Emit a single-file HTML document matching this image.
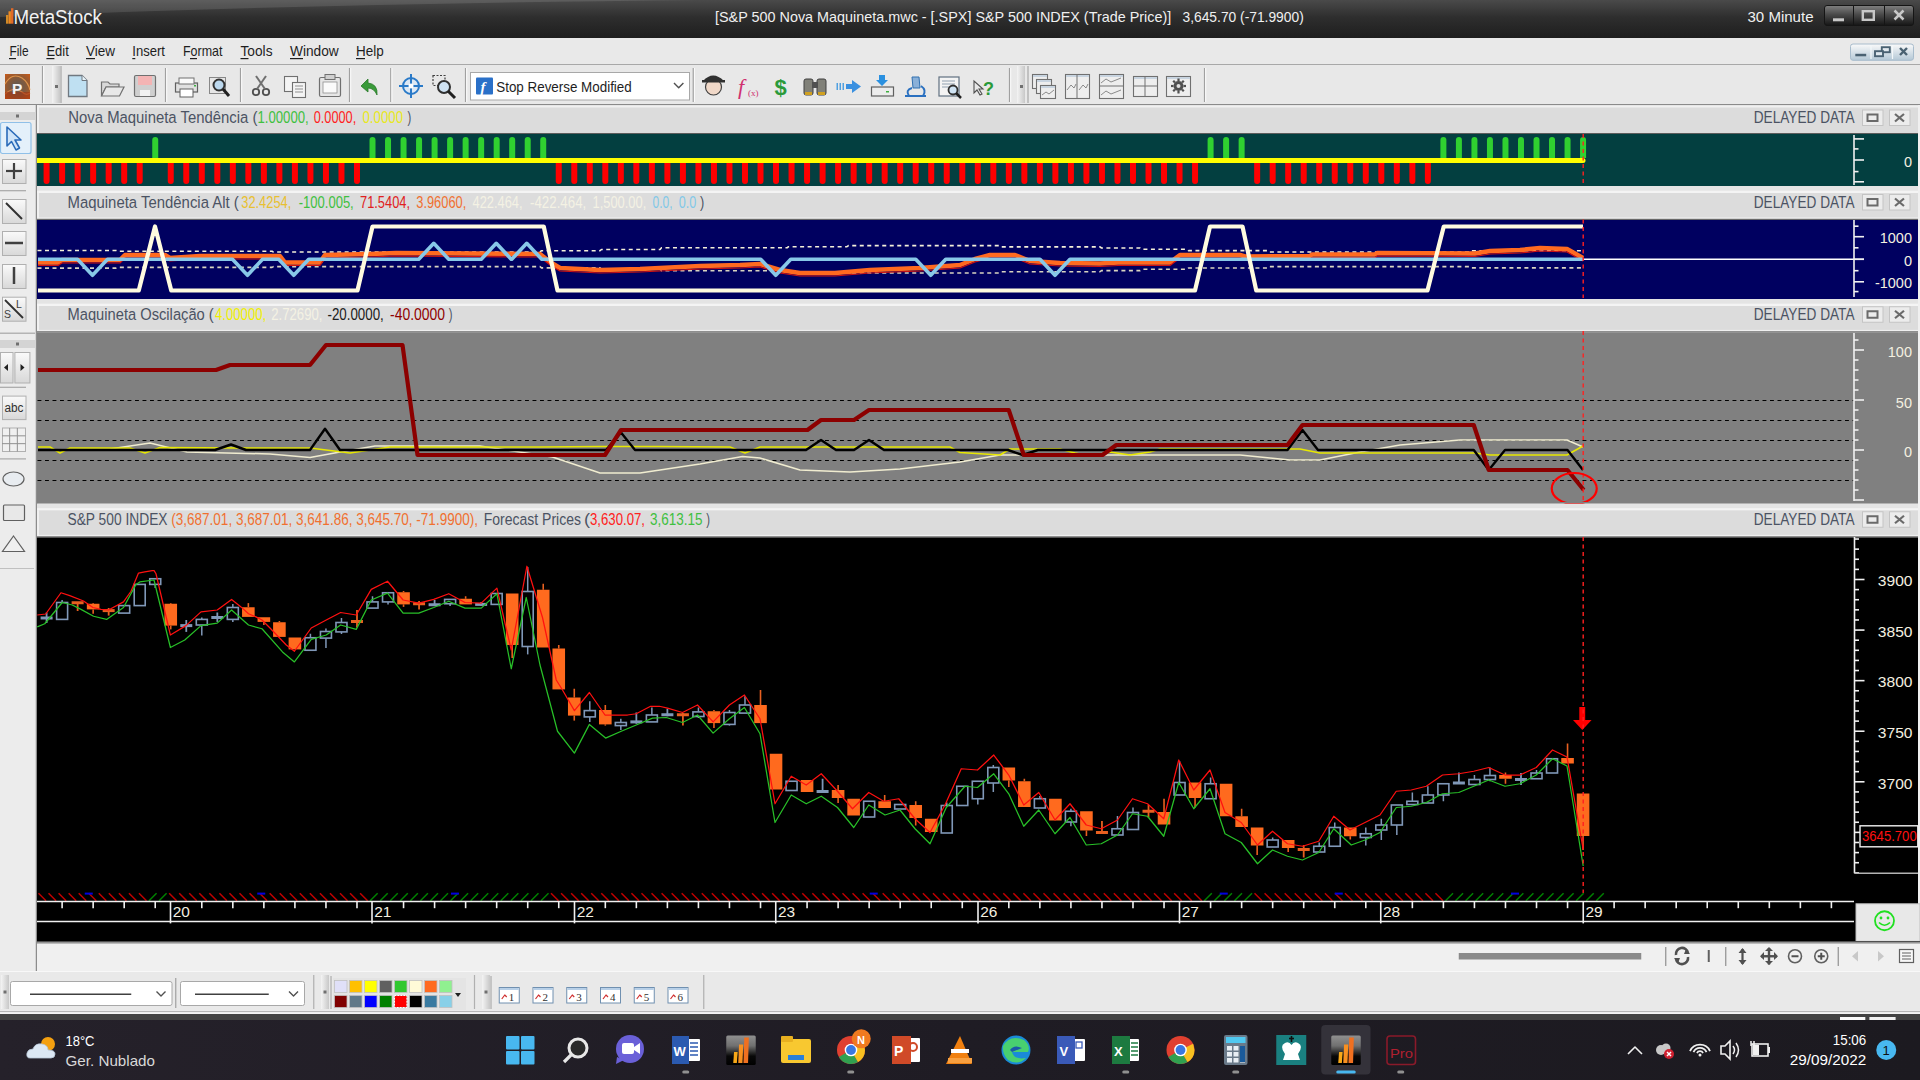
<!DOCTYPE html>
<html><head><meta charset="utf-8"><title>MetaStock</title>
<style>html,body{margin:0;padding:0;width:1920px;height:1080px;overflow:hidden;background:#e9e9e9;font-family:"Liberation Sans",sans-serif;} svg{display:block}</style>
</head><body>
<svg width="1920" height="1080" viewBox="0 0 1920 1080" font-family="Liberation Sans, sans-serif" shape-rendering="auto">
<defs><linearGradient id="tg" x1="0" y1="0" x2="0" y2="1"><stop offset="0" stop-color="#4a4a4a"/><stop offset="0.45" stop-color="#2e2e2e"/><stop offset="1" stop-color="#1e1e1e"/></linearGradient><linearGradient id="sheen" x1="0" y1="0" x2="1" y2="0"><stop offset="0" stop-color="#ffffff" stop-opacity="0.10"/><stop offset="0.6" stop-color="#ffffff" stop-opacity="0.05"/><stop offset="1" stop-color="#ffffff" stop-opacity="0"/></linearGradient><linearGradient id="btng" x1="0" y1="0" x2="0" y2="1"><stop offset="0" stop-color="#808080"/><stop offset="0.45" stop-color="#4a4a4a"/><stop offset="1" stop-color="#151515"/></linearGradient><linearGradient id="mdig" x1="0" y1="0" x2="0" y2="1"><stop offset="0" stop-color="#fafafa"/><stop offset="1" stop-color="#b4c8d6"/></linearGradient><linearGradient id="grip" x1="0" y1="0" x2="1" y2="0"><stop offset="0" stop-color="#f4f4f4"/><stop offset="1" stop-color="#c8c8c8"/></linearGradient><linearGradient id="tbbtn" x1="0" y1="0" x2="0" y2="1"><stop offset="0" stop-color="#fafafa"/><stop offset="1" stop-color="#d8d8d8"/></linearGradient><linearGradient id="picon" x1="0" y1="0" x2="1" y2="1"><stop offset="0" stop-color="#c86a28"/><stop offset="0.5" stop-color="#6a4a3a"/><stop offset="1" stop-color="#b04010"/></linearGradient><linearGradient id="taskg" x1="0" y1="0" x2="1" y2="0"><stop offset="0" stop-color="#25212a"/><stop offset="0.5" stop-color="#1f1c24"/><stop offset="1" stop-color="#1c1a20"/></linearGradient><linearGradient id="msg" x1="0" y1="0" x2="0" y2="1"><stop offset="0" stop-color="#909090"/><stop offset="0.35" stop-color="#707070"/><stop offset="0.7" stop-color="#080808"/><stop offset="1" stop-color="#000000"/></linearGradient></defs>
<rect x="0" y="0" width="1920" height="38" fill="url(#tg)" />
<path d="M0,0 L700,0 Q300,4 0,17 Z" fill="#ffffff" opacity="0.11"/>
<rect x="6" y="15" width="2.4" height="8.7" fill="#d08a28" />
<rect x="8.5" y="11.3" width="2.4" height="12.4" fill="#f08a20" />
<rect x="11" y="8.2" width="2.4" height="15.5" fill="#e06a28" />
<text x="13.4" y="23.7" font-size="20" fill="#f2f2f2" font-family="Liberation Sans" font-weight="normal" text-anchor="start" textLength="88.60" lengthAdjust="spacingAndGlyphs" >MetaStock</text>
<text x="715" y="22.2" font-size="15" fill="#f0f0f0" font-family="Liberation Sans" font-weight="normal" text-anchor="start" textLength="456.25" lengthAdjust="spacingAndGlyphs" >[S&amp;P 500 Nova Maquineta.mwc - [.SPX] S&amp;P 500 INDEX (Trade Price)]</text>
<text x="1182.5" y="22.2" font-size="15" fill="#f0f0f0" font-family="Liberation Sans" font-weight="normal" text-anchor="start" textLength="121.25" lengthAdjust="spacingAndGlyphs" >3,645.70 (-71.9900)</text>
<text x="1747.5" y="22.2" font-size="15" fill="#f0f0f0" font-family="Liberation Sans" font-weight="normal" text-anchor="start" textLength="66.00" lengthAdjust="spacingAndGlyphs" >30 Minute</text>
<rect x="1824.5" y="5.5" width="89" height="20" fill="url(#btng)" rx="2.5" stroke="#151515" stroke-width="1"/>
<line x1="1853.5" y1="6" x2="1853.5" y2="25" stroke="#151515" stroke-width="1" />
<line x1="1884.5" y1="6" x2="1884.5" y2="25" stroke="#151515" stroke-width="1" />
<rect x="1833" y="18.3" width="11" height="3" fill="#c8c8c8" />
<rect x="1862.8" y="11.2" width="11" height="8.6" fill="none" stroke="#c8c8c8" stroke-width="2.4"/>
<line x1="1894.5" y1="10.5" x2="1903.5" y2="19.5" stroke="#c8c8c8" stroke-width="2.5" />
<line x1="1903.5" y1="10.5" x2="1894.5" y2="19.5" stroke="#c8c8c8" stroke-width="2.5" />
<rect x="0" y="38" width="1920" height="26" fill="#e9e9e9" />
<line x1="0" y1="64.5" x2="1920" y2="64.5" stroke="#a8a8a8" stroke-width="1" />
<text x="9.4" y="56" font-size="14.5" fill="#1e1e1e" font-family="Liberation Sans" font-weight="normal" text-anchor="start" textLength="19.20" lengthAdjust="spacingAndGlyphs" >File</text>
<text x="46.4" y="56" font-size="14.5" fill="#1e1e1e" font-family="Liberation Sans" font-weight="normal" text-anchor="start" textLength="22.40" lengthAdjust="spacingAndGlyphs" >Edit</text>
<text x="86" y="56" font-size="14.5" fill="#1e1e1e" font-family="Liberation Sans" font-weight="normal" text-anchor="start" textLength="29.00" lengthAdjust="spacingAndGlyphs" >View</text>
<text x="132.3" y="56" font-size="14.5" fill="#1e1e1e" font-family="Liberation Sans" font-weight="normal" text-anchor="start" textLength="32.70" lengthAdjust="spacingAndGlyphs" >Insert</text>
<text x="183" y="56" font-size="14.5" fill="#1e1e1e" font-family="Liberation Sans" font-weight="normal" text-anchor="start" textLength="39.50" lengthAdjust="spacingAndGlyphs" >Format</text>
<text x="240.5" y="56" font-size="14.5" fill="#1e1e1e" font-family="Liberation Sans" font-weight="normal" text-anchor="start" textLength="32.00" lengthAdjust="spacingAndGlyphs" >Tools</text>
<text x="290" y="56" font-size="14.5" fill="#1e1e1e" font-family="Liberation Sans" font-weight="normal" text-anchor="start" textLength="48.70" lengthAdjust="spacingAndGlyphs" >Window</text>
<text x="356" y="56" font-size="14.5" fill="#1e1e1e" font-family="Liberation Sans" font-weight="normal" text-anchor="start" textLength="27.70" lengthAdjust="spacingAndGlyphs" >Help</text>
<rect x="9" y="58" width="7" height="1.2" fill="#1e1e1e" />
<rect x="46.4" y="58" width="8" height="1.2" fill="#1e1e1e" />
<rect x="86" y="58" width="9" height="1.2" fill="#1e1e1e" />
<rect x="132.3" y="58" width="3" height="1.2" fill="#1e1e1e" />
<rect x="190" y="58" width="7" height="1.2" fill="#1e1e1e" />
<rect x="240.5" y="58" width="8" height="1.2" fill="#1e1e1e" />
<rect x="290" y="58" width="13" height="1.2" fill="#1e1e1e" />
<rect x="356" y="58" width="9" height="1.2" fill="#1e1e1e" />
<rect x="1850.5" y="44" width="63" height="16.3" fill="url(#mdig)" stroke="#a8bccc" stroke-width="1" rx="2.5"/>
<line x1="1871" y1="45" x2="1871" y2="59" stroke="#f4f8fa" stroke-width="1.2" />
<line x1="1892.5" y1="45" x2="1892.5" y2="59" stroke="#f4f8fa" stroke-width="1.2" />
<rect x="1855.3" y="53.8" width="10.9" height="2.5" fill="#4a6272" />
<rect x="1881.8" y="47.2" width="8" height="5" fill="none" stroke="#4a6272" stroke-width="1.9"/>
<rect x="1875" y="51.2" width="8" height="5" fill="#dfe8ee" stroke="#4a6272" stroke-width="1.9"/>
<line x1="1900" y1="48" x2="1907" y2="55" stroke="#4a6272" stroke-width="2.4" />
<line x1="1907" y1="48" x2="1900" y2="55" stroke="#4a6272" stroke-width="2.4" />
<rect x="0" y="65" width="1920" height="39" fill="#e8e8e8" />
<line x1="0" y1="104.5" x2="1920" y2="104.5" stroke="#8a8a8a" stroke-width="1.2" />
<radialGradient id="pic2" cx="0.5" cy="0.5" r="0.7"><stop offset="0" stop-color="#5a5a58"/><stop offset="0.55" stop-color="#8a5a38"/><stop offset="1" stop-color="#c85a18"/></radialGradient>
<rect x="5" y="74" width="25" height="25" fill="url(#pic2)" />
<path d="M5,84 Q12,72 22,78 Q28,82 30,90" stroke="#f0a050" stroke-width="1.2" fill="none" opacity="0.8"/>
<path d="M5,94 Q14,86 22,92 Q26,96 30,93" stroke="#e08040" stroke-width="1.2" fill="none" opacity="0.8"/>
<rect x="5" y="92" width="25" height="7" fill="#a02808" opacity="0.45"/>
<text x="12" y="93.5" font-size="15.5" fill="#f4f4f4" font-family="Liberation Sans" font-weight="bold" text-anchor="start"  >P</text>
<line x1="42.5" y1="66" x2="42.5" y2="103" stroke="#a0a0a0" stroke-width="1.2" />
<line x1="43.7" y1="66" x2="43.7" y2="103" stroke="#fbfbfb" stroke-width="1" />
<rect x="52" y="66" width="8" height="37" fill="url(#grip)" />
<rect x="55" y="85.0" width="3" height="3" fill="#707070" />
<line x1="61" y1="66" x2="61" y2="103" stroke="#9a9a9a" stroke-width="1" />
<path d="M68.5,75.5 H82 L87,80.5 V96.5 H68.5 Z" fill="#bfe0f2" stroke="#707880" stroke-width="1.3"/>
<path d="M82,75.5 V80.5 H87" fill="#e8f4fa" stroke="#707880" stroke-width="1"/>
<path d="M101.5,82 H108 L110,84 H119 V87 H106 L101.5,96 Z" fill="#d8d8d8" stroke="#707070" stroke-width="1.2"/>
<path d="M101.5,96 L106,87 H124 L119.5,96 Z" fill="#e8e8e8" stroke="#707070" stroke-width="1.2"/>
<rect x="134.5" y="75.5" width="21" height="21" rx="1.5" fill="#cfcfcf" stroke="#707070" stroke-width="1.2"/>
<rect x="138" y="76" width="14" height="9" fill="#f4b4b4" />
<rect x="140" y="90" width="10" height="6" fill="#f2f2f2" />
<line x1="165.5" y1="68" x2="165.5" y2="102" stroke="#a0a0a0" stroke-width="1.2" />
<line x1="166.7" y1="68" x2="166.7" y2="102" stroke="#fbfbfb" stroke-width="1" />
<rect x="175.5" y="83" width="22" height="9" fill="#e0e0e0" stroke="#606060" stroke-width="1.2"/>
<rect x="179" y="78" width="15" height="6" fill="#fafafa" stroke="#707070" stroke-width="1"/>
<rect x="180" y="89" width="13" height="8" fill="#ffffff" stroke="#606060" stroke-width="1"/>
<rect x="194" y="85" width="2" height="1.5" fill="#3cb040" />
<rect x="209.5" y="77.5" width="16" height="16" fill="#e6e6e6" stroke="#888" stroke-width="1"/>
<circle cx="219" cy="85" r="5.5" fill="#bcd8ee" stroke="#303030" stroke-width="2"/>
<line x1="223" y1="89" x2="229" y2="96" stroke="#202020" stroke-width="3" />
<line x1="240.5" y1="68" x2="240.5" y2="102" stroke="#a0a0a0" stroke-width="1.2" />
<line x1="241.7" y1="68" x2="241.7" y2="102" stroke="#fbfbfb" stroke-width="1" />
<circle cx="256" cy="92" r="3.2" fill="none" stroke="#505050" stroke-width="1.8"/>
<circle cx="266" cy="92" r="3.2" fill="none" stroke="#505050" stroke-width="1.8"/>
<line x1="257" y1="89" x2="266" y2="76" stroke="#707070" stroke-width="2" />
<line x1="265" y1="89" x2="256" y2="76" stroke="#707070" stroke-width="2" />
<rect x="284.5" y="76.5" width="13" height="15" fill="#f4f4f4" stroke="#707070" stroke-width="1.1"/>
<rect x="292.5" y="82.5" width="13" height="15" fill="#f4f4f4" stroke="#707070" stroke-width="1.1"/>
<line x1="295" y1="86" x2="303" y2="86" stroke="#909090" stroke-width="1" />
<line x1="295" y1="89" x2="303" y2="89" stroke="#909090" stroke-width="1" />
<line x1="295" y1="92" x2="303" y2="92" stroke="#909090" stroke-width="1" />
<rect x="319.5" y="77.5" width="21" height="19" rx="1.5" fill="#e6e6e6" stroke="#707070" stroke-width="1.2"/>
<rect x="325" y="74.5" width="10" height="5" fill="#d0d0d0" stroke="#707070" stroke-width="1"/>
<rect x="323" y="82" width="14" height="11" fill="#fafafa" stroke="#909090" stroke-width="0.8"/>
<line x1="349.5" y1="68" x2="349.5" y2="102" stroke="#a0a0a0" stroke-width="1.2" />
<line x1="350.7" y1="68" x2="350.7" y2="102" stroke="#fbfbfb" stroke-width="1" />
<path d="M377,95 Q378,84 368,83 V79 L361,86 L368,92 V88 Q374,88 377,95 Z" fill="#3a9a3a" stroke="#2a7a2a" stroke-width="0.8"/>
<line x1="390.75" y1="68" x2="390.75" y2="102" stroke="#a0a0a0" stroke-width="1.2" />
<line x1="391.95" y1="68" x2="391.95" y2="102" stroke="#fbfbfb" stroke-width="1" />
<circle cx="411" cy="86" r="8" fill="#dde8f4" stroke="#2a7ac8" stroke-width="2"/>
<line x1="399" y1="86" x2="423" y2="86" stroke="#2a7ac8" stroke-width="2" />
<line x1="411" y1="74" x2="411" y2="98" stroke="#2a7ac8" stroke-width="2" />
<circle cx="411" cy="86" r="2.5" fill="#ffffff"/>
<rect x="433" y="75.5" width="12" height="10" fill="none" stroke="#404040" stroke-width="1.2" stroke-dasharray="2,1.5"/>
<circle cx="444" cy="87" r="6" fill="#cfe2f2" stroke="#303030" stroke-width="2"/>
<line x1="448" y1="91" x2="455" y2="98" stroke="#202020" stroke-width="3" />
<line x1="465.5" y1="68" x2="465.5" y2="102" stroke="#a0a0a0" stroke-width="1.2" />
<line x1="466.7" y1="68" x2="466.7" y2="102" stroke="#fbfbfb" stroke-width="1" />
<rect x="470.5" y="72.5" width="219" height="27.5" fill="#ffffff" stroke="#a8a8a8" stroke-width="1"/>
<rect x="476" y="77.5" width="17" height="17" fill="#2a70c8" rx="1"/>
<text x="480.5" y="92" font-size="15" fill="#ffffff" font-family="Liberation Serif" font-weight="bold" text-anchor="start"  font-style="italic">f</text>
<text x="496.25" y="91.5" font-size="14.5" fill="#1e1e1e" font-family="Liberation Sans" font-weight="normal" text-anchor="start" textLength="135.50" lengthAdjust="spacingAndGlyphs" >Stop Reverse Modified</text>
<polyline points="674.00,83.00 678.70,87.70 683.40,83.00" fill="none" stroke="#505050" stroke-width="1.4" stroke-linejoin="round" />
<line x1="693.25" y1="68" x2="693.25" y2="102" stroke="#a0a0a0" stroke-width="1.2" />
<line x1="694.45" y1="68" x2="694.45" y2="102" stroke="#fbfbfb" stroke-width="1" />
<circle cx="713.5" cy="87" r="8" fill="#f0d8c8" stroke="#404040" stroke-width="1.2"/>
<path d="M703,81 Q713,70 724,81 Z" fill="#303030"/>
<rect x="702" y="80" width="23" height="2.5" fill="#303030" />
<text x="738" y="94" font-size="22" fill="#d03070" font-family="Liberation Serif" font-weight="normal" text-anchor="start"  font-style="italic">f</text>
<text x="748" y="96" font-size="9" fill="#d03070" font-family="Liberation Serif" font-weight="normal" text-anchor="start"  >(x)</text>
<text x="774.5" y="95" font-size="22" fill="#2a9a3a" font-family="Liberation Sans" font-weight="bold" text-anchor="start"  >$</text>
<rect x="804" y="79" width="9" height="16" rx="2" fill="#808078" stroke="#404040" stroke-width="1"/>
<rect x="817" y="79" width="9" height="16" rx="2" fill="#808078" stroke="#404040" stroke-width="1"/>
<rect x="812" y="82" width="6" height="6" fill="#505050" />
<rect x="805" y="92" width="7" height="3" fill="#d0a020" />
<rect x="818" y="92" width="7" height="3" fill="#d0a020" />
<rect x="836.5" y="83" width="1.5" height="7" fill="#50a0e0" />
<rect x="839.5" y="83" width="1.5" height="7" fill="#50a0e0" />
<rect x="842.5" y="83" width="1.5" height="7" fill="#50a0e0" />
<path d="M846,84 H852 V80 L861,86.5 L852,93 V89 H846 Z" fill="#3a90e0"/>
<rect x="871.5" y="87" width="22" height="9" fill="#ececec" stroke="#606060" stroke-width="1.2"/>
<path d="M879,75 H885 V80 H888 L882,86 L876,80 H879 Z" fill="#2a90e0"/>
<rect x="886" y="91" width="3" height="1.5" fill="#40b040" />
<path d="M912,77 L919,77 L920,88 L913,88 Z" fill="#8ab0d8" stroke="#3070b0" stroke-width="1"/>
<path d="M905,96 H926 M909,96 Q905,90 912,88 M921,86 Q927,90 923,96" stroke="#2a70c0" stroke-width="2" fill="none"/>
<rect x="939" y="77" width="20" height="19" fill="#f4f4f4" stroke="#607080" stroke-width="1.2"/>
<line x1="942" y1="81" x2="955" y2="81" stroke="#90a0b0" stroke-width="1" />
<line x1="942" y1="84" x2="955" y2="84" stroke="#90a0b0" stroke-width="1" />
<line x1="942" y1="87" x2="955" y2="87" stroke="#90a0b0" stroke-width="1" />
<circle cx="953" cy="90" r="4.5" fill="#d0e4f4" stroke="#303030" stroke-width="1.8"/>
<line x1="956" y1="93" x2="961" y2="98" stroke="#202020" stroke-width="2.5" />
<path d="M974,81 L974,93 L977,90 L980,95 L982,94 L979,89 L983,89 Z" fill="#e8e8e8" stroke="#505050" stroke-width="1.1"/>
<text x="983" y="95" font-size="18" fill="#2a9a3a" font-family="Liberation Sans" font-weight="bold" text-anchor="start"  >?</text>
<line x1="1009.5" y1="68" x2="1009.5" y2="102" stroke="#a0a0a0" stroke-width="1.2" />
<line x1="1010.7" y1="68" x2="1010.7" y2="102" stroke="#fbfbfb" stroke-width="1" />
<rect x="1017" y="66" width="8" height="37" fill="url(#grip)" />
<rect x="1020" y="85.0" width="3" height="3" fill="#707070" />
<line x1="1028" y1="66" x2="1028" y2="103" stroke="#9a9a9a" stroke-width="1" />
<rect x="1032.5" y="74.5" width="15" height="14" fill="#eeeeee" stroke="#707070" stroke-width="1.1"/>
<rect x="1033" y="75" width="14" height="2" fill="#c8d4e0" />
<rect x="1036.5" y="79.5" width="15" height="14" fill="#eeeeee" stroke="#707070" stroke-width="1.1"/>
<rect x="1037" y="80" width="14" height="2" fill="#c8d4e0" />
<rect x="1040.5" y="85.5" width="15" height="13" fill="#eeeeee" stroke="#707070" stroke-width="1.1"/>
<rect x="1041" y="86" width="14" height="2" fill="#c8d4e0" />
<polyline points="1042.00,95.00 1046.00,92.00 1049.00,94.00 1054.00,90.00" fill="none" stroke="#707070" stroke-width="0.8" stroke-linejoin="round" />
<rect x="1065.5" y="74.5" width="24" height="24" fill="#eeeeee" stroke="#707070" stroke-width="1.1"/>
<rect x="1066" y="75" width="23" height="2" fill="#c8d4e0" />
<line x1="1077" y1="75" x2="1077" y2="98" stroke="#707070" stroke-width="1" />
<polyline points="1067.00,90.00 1071.00,85.00 1074.00,88.00 1076.00,84.00" fill="none" stroke="#707070" stroke-width="0.8" stroke-linejoin="round" />
<polyline points="1079.00,90.00 1083.00,85.00 1086.00,88.00 1088.00,84.00" fill="none" stroke="#707070" stroke-width="0.8" stroke-linejoin="round" />
<rect x="1099.5" y="74.5" width="24" height="24" fill="#eeeeee" stroke="#707070" stroke-width="1.1"/>
<rect x="1100" y="75" width="23" height="2" fill="#c8d4e0" />
<line x1="1099" y1="86" x2="1123" y2="86" stroke="#707070" stroke-width="1" />
<polyline points="1101.00,83.00 1106.00,79.00 1111.00,82.00 1121.00,78.00" fill="none" stroke="#707070" stroke-width="0.8" stroke-linejoin="round" />
<polyline points="1101.00,95.00 1106.00,91.00 1111.00,94.00 1121.00,90.00" fill="none" stroke="#707070" stroke-width="0.8" stroke-linejoin="round" />
<rect x="1133.5" y="76.5" width="24" height="20" fill="#eeeeee" stroke="#707070" stroke-width="1.1"/>
<rect x="1134" y="77" width="23" height="2" fill="#c8d4e0" />
<line x1="1145" y1="76" x2="1145" y2="96" stroke="#707070" stroke-width="1" />
<line x1="1133" y1="86" x2="1157" y2="86" stroke="#707070" stroke-width="1" />
<rect x="1166.5" y="76.5" width="24" height="20" fill="#eeeeee" stroke="#707070" stroke-width="1.1"/>
<rect x="1167" y="77" width="23" height="2" fill="#c8d4e0" />
<circle cx="1178.5" cy="86" r="5" fill="#505050"/><circle cx="1178.5" cy="86" r="2" fill="#e0e0e0"/>
<line x1="1183.5" y1="86.0" x2="1186.0" y2="86.0" stroke="#505050" stroke-width="2.2" />
<line x1="1182.0355339059327" y1="89.53553390593274" x2="1183.803300858899" y2="91.3033008588991" stroke="#505050" stroke-width="2.2" />
<line x1="1178.5" y1="91.0" x2="1178.5" y2="93.5" stroke="#505050" stroke-width="2.2" />
<line x1="1174.9644660940673" y1="89.53553390593274" x2="1173.196699141101" y2="91.3033008588991" stroke="#505050" stroke-width="2.2" />
<line x1="1173.5" y1="86.0" x2="1171.0" y2="86.0" stroke="#505050" stroke-width="2.2" />
<line x1="1174.9644660940673" y1="82.46446609406726" x2="1173.196699141101" y2="80.6966991411009" stroke="#505050" stroke-width="2.2" />
<line x1="1178.5" y1="81.0" x2="1178.5" y2="78.5" stroke="#505050" stroke-width="2.2" />
<line x1="1182.0355339059327" y1="82.46446609406726" x2="1183.803300858899" y2="80.6966991411009" stroke="#505050" stroke-width="2.2" />
<line x1="1204.5" y1="68" x2="1204.5" y2="102" stroke="#a0a0a0" stroke-width="1.2" />
<line x1="1205.7" y1="68" x2="1205.7" y2="102" stroke="#fbfbfb" stroke-width="1" />
<rect x="0" y="105" width="36" height="866" fill="#ececec" />
<line x1="36.5" y1="105" x2="36.5" y2="971" stroke="#8c8c8c" stroke-width="1.5" />
<rect x="0" y="112" width="35" height="8" fill="#d4d4d4" />
<rect x="16" y="114.5" width="3" height="3" fill="#707070" />
<rect x="0.5" y="122.5" width="30.5" height="31" rx="2" fill="#e4f0fa" stroke="#90c0e8" stroke-width="1.2"/>
<path d="M7,127 L7,146 L11.5,141.5 L16,150 L19.5,148 L15,140 L21,140 Z" fill="#cfe4f8" stroke="#2a6ab8" stroke-width="1.6" stroke-linejoin="round"/>
<rect x="2.5" y="159.5" width="23.5" height="24" fill="url(#tbbtn)" stroke="#b0b0b0" stroke-width="1"/>
<line x1="6" y1="171" x2="22" y2="171" stroke="#404040" stroke-width="2.2" />
<line x1="14" y1="163" x2="14" y2="179" stroke="#404040" stroke-width="2.2" />
<line x1="0" y1="190.7" x2="26" y2="190.7" stroke="#a8a8a8" stroke-width="1.2" />
<rect x="2.5" y="199.5" width="23.5" height="24" fill="url(#tbbtn)" stroke="#b0b0b0" stroke-width="1"/>
<line x1="6" y1="203" x2="22" y2="219" stroke="#303030" stroke-width="2" />
<rect x="2.5" y="231.5" width="23.5" height="24" fill="url(#tbbtn)" stroke="#b0b0b0" stroke-width="1"/>
<line x1="5" y1="243" x2="23" y2="243" stroke="#404040" stroke-width="2.5" />
<rect x="2.5" y="264.5" width="23.5" height="24" fill="url(#tbbtn)" stroke="#b0b0b0" stroke-width="1"/>
<line x1="14" y1="267" x2="14" y2="284" stroke="#404040" stroke-width="2.5" />
<rect x="2.5" y="297.2" width="23.5" height="24" fill="url(#tbbtn)" stroke="#b0b0b0" stroke-width="1"/>
<line x1="5" y1="300" x2="23" y2="318" stroke="#303030" stroke-width="1.8" />
<text x="4" y="318" font-size="10.5" fill="#404040" font-family="Liberation Sans" font-weight="normal" text-anchor="start"  >S</text>
<text x="16" y="307.5" font-size="10.5" fill="#404040" font-family="Liberation Sans" font-weight="normal" text-anchor="start"  >L</text>
<line x1="0" y1="333.2" x2="35" y2="333.2" stroke="#b4b4b4" stroke-width="1.4" />
<rect x="0" y="340" width="35" height="8" fill="#d4d4d4" />
<rect x="16" y="342.5" width="3" height="3" fill="#707070" />
<rect x="0.5" y="352.5" width="12.5" height="30.5" fill="url(#tbbtn)" stroke="#b0b0b0" stroke-width="1"/>
<rect x="14.9" y="352.5" width="15" height="30.5" fill="url(#tbbtn)" stroke="#b0b0b0" stroke-width="1"/>
<path d="M4,367.5 L8,364 L8,371 Z" fill="#202020"/><path d="M24.5,367.5 L20.5,364 L20.5,371 Z" fill="#202020"/>
<line x1="0" y1="387.3" x2="26" y2="387.3" stroke="#a8a8a8" stroke-width="1.2" />
<rect x="2.5" y="396.1" width="23.5" height="23.5" fill="url(#tbbtn)" stroke="#b0b0b0" stroke-width="1"/>
<text x="4.5" y="412" font-size="12" fill="#303030" font-family="Liberation Sans" font-weight="normal" text-anchor="start" textLength="19.00" lengthAdjust="spacingAndGlyphs" >abc</text>
<rect x="2.5" y="428" width="23" height="23.5" fill="#f0f0f0" stroke="#b0b0b0" stroke-width="1"/>
<line x1="9.666666666666668" y1="428" x2="9.666666666666668" y2="451.5" stroke="#909090" stroke-width="1" />
<line x1="2" y1="435.8333333333333" x2="25.5" y2="435.8333333333333" stroke="#909090" stroke-width="1" />
<line x1="17.333333333333336" y1="428" x2="17.333333333333336" y2="451.5" stroke="#909090" stroke-width="1" />
<line x1="2" y1="443.6666666666667" x2="25.5" y2="443.6666666666667" stroke="#909090" stroke-width="1" />
<line x1="0" y1="458.9" x2="26" y2="458.9" stroke="#a8a8a8" stroke-width="1.2" />
<ellipse cx="13.5" cy="479" rx="10.5" ry="7" fill="#e8ecf0" stroke="#606060" stroke-width="1.2"/>
<rect x="3.5" y="505" width="21" height="15.5" rx="1" fill="#e8e8e8" stroke="#606060" stroke-width="1.2"/>
<path d="M13.5,536 L24.5,551.5 L2.5,551.5 Z" fill="#f0f0f0" stroke="#606060" stroke-width="1.2"/>
<line x1="0" y1="568.5" x2="34" y2="568.5" stroke="#c0c0c0" stroke-width="1" />
<rect x="1918" y="105" width="2" height="866" fill="#f0f0f0" />
<rect x="37" y="105" width="1881" height="29" fill="#dcdcdc" />
<rect x="37" y="105.5" width="1881" height="2" fill="#f0f0f0" />
<rect x="37" y="105" width="2" height="29" fill="#f0f0f0" />
<rect x="37" y="133" width="1881" height="1.2" fill="#5c5c5c" />
<text x="68.3" y="123.0" font-size="16.3" fill="#4b5363" font-family="Liberation Sans" font-weight="normal" text-anchor="start" textLength="189.10" lengthAdjust="spacingAndGlyphs" xml:space="preserve">Nova Maquineta Tendência (</text>
<text x="257.5" y="123.0" font-size="16.3" fill="#40c040" font-family="Liberation Sans" font-weight="normal" text-anchor="start" textLength="51.25" lengthAdjust="spacingAndGlyphs" xml:space="preserve">1.00000,</text>
<text x="313.75" y="123.0" font-size="16.3" fill="#ff2020" font-family="Liberation Sans" font-weight="normal" text-anchor="start" textLength="42.50" lengthAdjust="spacingAndGlyphs" xml:space="preserve">0.0000,</text>
<text x="362.5" y="123.0" font-size="16.3" fill="#e8e820" font-family="Liberation Sans" font-weight="normal" text-anchor="start" textLength="40.50" lengthAdjust="spacingAndGlyphs" xml:space="preserve">0.0000</text>
<text x="407.5" y="123.0" font-size="16.3" fill="#4b5363" font-family="Liberation Sans" font-weight="normal" text-anchor="start" textLength="3.75" lengthAdjust="spacingAndGlyphs" xml:space="preserve">)</text>
<text x="1753.75" y="123.0" font-size="16.3" fill="#4b5363" font-family="Liberation Sans" font-weight="normal" text-anchor="start" textLength="100.75" lengthAdjust="spacingAndGlyphs" >DELAYED DATA</text>
<rect x="1862.5" y="110.0" width="20.5" height="15.5" fill="#ececec" stroke="#c4c4c4" stroke-width="1"/>
<rect x="1889.5" y="110.0" width="20.5" height="15.5" fill="#ececec" stroke="#c4c4c4" stroke-width="1"/>
<rect x="1867.5" y="114.5" width="10" height="6.5" fill="none" stroke="#6a6a6a" stroke-width="2"/>
<line x1="1895" y1="114.0" x2="1904" y2="121.5" stroke="#6a6a6a" stroke-width="2.2" />
<line x1="1904" y1="114.0" x2="1895" y2="121.5" stroke="#6a6a6a" stroke-width="2.2" />
<rect x="37" y="186" width="1881" height="34" fill="#e4e4e4" />
<rect x="37" y="190.7" width="1881" height="2.3" fill="#f4f4f4" />
<rect x="39" y="193" width="1879" height="25.4" fill="#dcdcdc" />
<rect x="37" y="193" width="2" height="25.4" fill="#f0f0f0" />
<rect x="37" y="217.4" width="1881" height="1.4" fill="#efefef" />
<rect x="37" y="218.8" width="1881" height="1.2" fill="#686868" />
<text x="67.5" y="207.5" font-size="16.3" fill="#4b5363" font-family="Liberation Sans" font-weight="normal" text-anchor="start" textLength="171.25" lengthAdjust="spacingAndGlyphs" xml:space="preserve">Maquineta Tendência Alt (</text>
<text x="241.25" y="207.5" font-size="16.3" fill="#e8c030" font-family="Liberation Sans" font-weight="normal" text-anchor="start" textLength="50.00" lengthAdjust="spacingAndGlyphs" xml:space="preserve">32.4254,</text>
<text x="298.75" y="207.5" font-size="16.3" fill="#40c040" font-family="Liberation Sans" font-weight="normal" text-anchor="start" textLength="55.00" lengthAdjust="spacingAndGlyphs" xml:space="preserve">-100.005,</text>
<text x="360" y="207.5" font-size="16.3" fill="#e02020" font-family="Liberation Sans" font-weight="normal" text-anchor="start" textLength="50.00" lengthAdjust="spacingAndGlyphs" xml:space="preserve">71.5404,</text>
<text x="416.25" y="207.5" font-size="16.3" fill="#f07030" font-family="Liberation Sans" font-weight="normal" text-anchor="start" textLength="50.00" lengthAdjust="spacingAndGlyphs" xml:space="preserve">3.96060,</text>
<text x="472.5" y="207.5" font-size="16.3" fill="#f4f2e4" font-family="Liberation Sans" font-weight="normal" text-anchor="start" textLength="50.00" lengthAdjust="spacingAndGlyphs" xml:space="preserve">422.464,</text>
<text x="530" y="207.5" font-size="16.3" fill="#f4f2e4" font-family="Liberation Sans" font-weight="normal" text-anchor="start" textLength="56.25" lengthAdjust="spacingAndGlyphs" xml:space="preserve">-422.464,</text>
<text x="592.5" y="207.5" font-size="16.3" fill="#f4f2e4" font-family="Liberation Sans" font-weight="normal" text-anchor="start" textLength="53.75" lengthAdjust="spacingAndGlyphs" xml:space="preserve">1,500.00,</text>
<text x="652.5" y="207.5" font-size="16.3" fill="#80c8e8" font-family="Liberation Sans" font-weight="normal" text-anchor="start" textLength="20.00" lengthAdjust="spacingAndGlyphs" xml:space="preserve">0.0,</text>
<text x="678.75" y="207.5" font-size="16.3" fill="#80c8e8" font-family="Liberation Sans" font-weight="normal" text-anchor="start" textLength="17.50" lengthAdjust="spacingAndGlyphs" xml:space="preserve">0.0</text>
<text x="700" y="207.5" font-size="16.3" fill="#4b5363" font-family="Liberation Sans" font-weight="normal" text-anchor="start" textLength="4.25" lengthAdjust="spacingAndGlyphs" xml:space="preserve">)</text>
<text x="1753.75" y="207.5" font-size="16.3" fill="#4b5363" font-family="Liberation Sans" font-weight="normal" text-anchor="start" textLength="100.75" lengthAdjust="spacingAndGlyphs" >DELAYED DATA</text>
<rect x="1862.5" y="194.5" width="20.5" height="15.5" fill="#ececec" stroke="#c4c4c4" stroke-width="1"/>
<rect x="1889.5" y="194.5" width="20.5" height="15.5" fill="#ececec" stroke="#c4c4c4" stroke-width="1"/>
<rect x="1867.5" y="199" width="10" height="6.5" fill="none" stroke="#6a6a6a" stroke-width="2"/>
<line x1="1895" y1="198.5" x2="1904" y2="206" stroke="#6a6a6a" stroke-width="2.2" />
<line x1="1904" y1="198.5" x2="1895" y2="206" stroke="#6a6a6a" stroke-width="2.2" />
<rect x="37" y="299" width="1881" height="33.5" fill="#e4e4e4" />
<rect x="37" y="303.7" width="1881" height="2.3" fill="#f4f4f4" />
<rect x="39" y="306" width="1879" height="24.9" fill="#dcdcdc" />
<rect x="37" y="306" width="2" height="24.9" fill="#f0f0f0" />
<rect x="37" y="329.9" width="1881" height="1.4" fill="#efefef" />
<rect x="37" y="331.3" width="1881" height="1.2" fill="#686868" />
<text x="67.5" y="319.75" font-size="16.3" fill="#4b5363" font-family="Liberation Sans" font-weight="normal" text-anchor="start" textLength="146.25" lengthAdjust="spacingAndGlyphs" xml:space="preserve">Maquineta Oscilação (</text>
<text x="215" y="319.75" font-size="16.3" fill="#f0f000" font-family="Liberation Sans" font-weight="normal" text-anchor="start" textLength="51.25" lengthAdjust="spacingAndGlyphs" xml:space="preserve">4.00000,</text>
<text x="271.25" y="319.75" font-size="16.3" fill="#f4f2e4" font-family="Liberation Sans" font-weight="normal" text-anchor="start" textLength="51.25" lengthAdjust="spacingAndGlyphs" xml:space="preserve">2.72690,</text>
<text x="327.5" y="319.75" font-size="16.3" fill="#202020" font-family="Liberation Sans" font-weight="normal" text-anchor="start" textLength="56.25" lengthAdjust="spacingAndGlyphs" xml:space="preserve">-20.0000,</text>
<text x="390" y="319.75" font-size="16.3" fill="#900000" font-family="Liberation Sans" font-weight="normal" text-anchor="start" textLength="55.00" lengthAdjust="spacingAndGlyphs" xml:space="preserve">-40.0000</text>
<text x="448.75" y="319.75" font-size="16.3" fill="#4b5363" font-family="Liberation Sans" font-weight="normal" text-anchor="start" textLength="3.75" lengthAdjust="spacingAndGlyphs" xml:space="preserve">)</text>
<text x="1753.75" y="319.75" font-size="16.3" fill="#4b5363" font-family="Liberation Sans" font-weight="normal" text-anchor="start" textLength="100.75" lengthAdjust="spacingAndGlyphs" >DELAYED DATA</text>
<rect x="1862.5" y="306.75" width="20.5" height="15.5" fill="#ececec" stroke="#c4c4c4" stroke-width="1"/>
<rect x="1889.5" y="306.75" width="20.5" height="15.5" fill="#ececec" stroke="#c4c4c4" stroke-width="1"/>
<rect x="1867.5" y="311.25" width="10" height="6.5" fill="none" stroke="#6a6a6a" stroke-width="2"/>
<line x1="1895" y1="310.75" x2="1904" y2="318.25" stroke="#6a6a6a" stroke-width="2.2" />
<line x1="1904" y1="310.75" x2="1895" y2="318.25" stroke="#6a6a6a" stroke-width="2.2" />
<rect x="37" y="503.5" width="1881" height="34.0" fill="#e4e4e4" />
<rect x="37" y="508.2" width="1881" height="2.3" fill="#f4f4f4" />
<rect x="39" y="510.5" width="1879" height="25.4" fill="#dcdcdc" />
<rect x="37" y="510.5" width="2" height="25.4" fill="#f0f0f0" />
<rect x="37" y="534.9" width="1881" height="1.4" fill="#efefef" />
<rect x="37" y="536.3" width="1881" height="1.2" fill="#686868" />
<text x="67.5" y="524.75" font-size="16.3" fill="#4b5363" font-family="Liberation Sans" font-weight="normal" text-anchor="start" textLength="100.00" lengthAdjust="spacingAndGlyphs" xml:space="preserve">S&amp;P 500 INDEX</text>
<text x="171.25" y="524.75" font-size="16.3" fill="#f07030" font-family="Liberation Sans" font-weight="normal" text-anchor="start" textLength="306.75" lengthAdjust="spacingAndGlyphs" xml:space="preserve">(3,687.01, 3,687.01, 3,641.86, 3,645.70, -71.9900),</text>
<text x="483.75" y="524.75" font-size="16.3" fill="#4b5363" font-family="Liberation Sans" font-weight="normal" text-anchor="start" textLength="97.25" lengthAdjust="spacingAndGlyphs" xml:space="preserve">Forecast Prices</text>
<text x="584" y="524.75" font-size="16.3" fill="#4b5363" font-family="Liberation Sans" font-weight="normal" text-anchor="start" textLength="6.00" lengthAdjust="spacingAndGlyphs" xml:space="preserve">(</text>
<text x="590" y="524.75" font-size="16.3" fill="#ff2020" font-family="Liberation Sans" font-weight="normal" text-anchor="start" textLength="55.00" lengthAdjust="spacingAndGlyphs" xml:space="preserve">3,630.07,</text>
<text x="650" y="524.75" font-size="16.3" fill="#40c040" font-family="Liberation Sans" font-weight="normal" text-anchor="start" textLength="52.50" lengthAdjust="spacingAndGlyphs" xml:space="preserve">3,613.15</text>
<text x="706.25" y="524.75" font-size="16.3" fill="#4b5363" font-family="Liberation Sans" font-weight="normal" text-anchor="start" textLength="3.75" lengthAdjust="spacingAndGlyphs" xml:space="preserve">)</text>
<text x="1753.75" y="524.75" font-size="16.3" fill="#4b5363" font-family="Liberation Sans" font-weight="normal" text-anchor="start" textLength="100.75" lengthAdjust="spacingAndGlyphs" >DELAYED DATA</text>
<rect x="1862.5" y="511.75" width="20.5" height="15.5" fill="#ececec" stroke="#c4c4c4" stroke-width="1"/>
<rect x="1889.5" y="511.75" width="20.5" height="15.5" fill="#ececec" stroke="#c4c4c4" stroke-width="1"/>
<rect x="1867.5" y="516.25" width="10" height="6.5" fill="none" stroke="#6a6a6a" stroke-width="2"/>
<line x1="1895" y1="515.75" x2="1904" y2="523.25" stroke="#6a6a6a" stroke-width="2.2" />
<line x1="1904" y1="515.75" x2="1895" y2="523.25" stroke="#6a6a6a" stroke-width="2.2" />
<rect x="37" y="134" width="1881" height="52" fill="#033f40" />
<path d="M43.59,160 V181 A3,3 0 0 0 49.59,181 V160 Z" fill="#ff0000"/>
<path d="M59.11,160 V181 A3,3 0 0 0 65.11,181 V160 Z" fill="#ff0000"/>
<path d="M74.63,160 V181 A3,3 0 0 0 80.63,181 V160 Z" fill="#ff0000"/>
<path d="M90.15,160 V181 A3,3 0 0 0 96.15,181 V160 Z" fill="#ff0000"/>
<path d="M105.67,160 V181 A3,3 0 0 0 111.67,181 V160 Z" fill="#ff0000"/>
<path d="M121.19,160 V181 A3,3 0 0 0 127.19,181 V160 Z" fill="#ff0000"/>
<path d="M136.71,160 V181 A3,3 0 0 0 142.71,181 V160 Z" fill="#ff0000"/>
<path d="M152.23,158 V140 A3,3 0 0 1 158.23,140 V158 Z" fill="#30d030"/>
<path d="M167.75,160 V181 A3,3 0 0 0 173.75,181 V160 Z" fill="#ff0000"/>
<path d="M183.27,160 V181 A3,3 0 0 0 189.27,181 V160 Z" fill="#ff0000"/>
<path d="M198.79,160 V181 A3,3 0 0 0 204.79,181 V160 Z" fill="#ff0000"/>
<path d="M214.31,160 V181 A3,3 0 0 0 220.31,181 V160 Z" fill="#ff0000"/>
<path d="M229.83,160 V181 A3,3 0 0 0 235.83,181 V160 Z" fill="#ff0000"/>
<path d="M245.35,160 V181 A3,3 0 0 0 251.35,181 V160 Z" fill="#ff0000"/>
<path d="M260.87,160 V181 A3,3 0 0 0 266.87,181 V160 Z" fill="#ff0000"/>
<path d="M276.39,160 V181 A3,3 0 0 0 282.39,181 V160 Z" fill="#ff0000"/>
<path d="M291.91,160 V181 A3,3 0 0 0 297.91,181 V160 Z" fill="#ff0000"/>
<path d="M307.43,160 V181 A3,3 0 0 0 313.43,181 V160 Z" fill="#ff0000"/>
<path d="M322.95,160 V181 A3,3 0 0 0 328.95,181 V160 Z" fill="#ff0000"/>
<path d="M338.47,160 V181 A3,3 0 0 0 344.47,181 V160 Z" fill="#ff0000"/>
<path d="M353.99,160 V181 A3,3 0 0 0 359.99,181 V160 Z" fill="#ff0000"/>
<path d="M369.51,158 V140 A3,3 0 0 1 375.51,140 V158 Z" fill="#30d030"/>
<path d="M385.03,158 V140 A3,3 0 0 1 391.03,140 V158 Z" fill="#30d030"/>
<path d="M400.55,158 V140 A3,3 0 0 1 406.55,140 V158 Z" fill="#30d030"/>
<path d="M416.07,158 V140 A3,3 0 0 1 422.07,140 V158 Z" fill="#30d030"/>
<path d="M431.59,158 V140 A3,3 0 0 1 437.59,140 V158 Z" fill="#30d030"/>
<path d="M447.11,158 V140 A3,3 0 0 1 453.11,140 V158 Z" fill="#30d030"/>
<path d="M462.63,158 V140 A3,3 0 0 1 468.63,140 V158 Z" fill="#30d030"/>
<path d="M478.15,158 V140 A3,3 0 0 1 484.15,140 V158 Z" fill="#30d030"/>
<path d="M493.67,158 V140 A3,3 0 0 1 499.67,140 V158 Z" fill="#30d030"/>
<path d="M509.19,158 V140 A3,3 0 0 1 515.19,140 V158 Z" fill="#30d030"/>
<path d="M524.71,158 V140 A3,3 0 0 1 530.71,140 V158 Z" fill="#30d030"/>
<path d="M540.23,158 V140 A3,3 0 0 1 546.23,140 V158 Z" fill="#30d030"/>
<path d="M555.75,160 V181 A3,3 0 0 0 561.75,181 V160 Z" fill="#ff0000"/>
<path d="M571.27,160 V181 A3,3 0 0 0 577.27,181 V160 Z" fill="#ff0000"/>
<path d="M586.79,160 V181 A3,3 0 0 0 592.79,181 V160 Z" fill="#ff0000"/>
<path d="M602.31,160 V181 A3,3 0 0 0 608.31,181 V160 Z" fill="#ff0000"/>
<path d="M617.83,160 V181 A3,3 0 0 0 623.83,181 V160 Z" fill="#ff0000"/>
<path d="M633.35,160 V181 A3,3 0 0 0 639.35,181 V160 Z" fill="#ff0000"/>
<path d="M648.87,160 V181 A3,3 0 0 0 654.87,181 V160 Z" fill="#ff0000"/>
<path d="M664.39,160 V181 A3,3 0 0 0 670.39,181 V160 Z" fill="#ff0000"/>
<path d="M679.91,160 V181 A3,3 0 0 0 685.91,181 V160 Z" fill="#ff0000"/>
<path d="M695.43,160 V181 A3,3 0 0 0 701.43,181 V160 Z" fill="#ff0000"/>
<path d="M710.95,160 V181 A3,3 0 0 0 716.95,181 V160 Z" fill="#ff0000"/>
<path d="M726.47,160 V181 A3,3 0 0 0 732.47,181 V160 Z" fill="#ff0000"/>
<path d="M741.99,160 V181 A3,3 0 0 0 747.99,181 V160 Z" fill="#ff0000"/>
<path d="M757.51,160 V181 A3,3 0 0 0 763.51,181 V160 Z" fill="#ff0000"/>
<path d="M773.03,160 V181 A3,3 0 0 0 779.03,181 V160 Z" fill="#ff0000"/>
<path d="M788.55,160 V181 A3,3 0 0 0 794.55,181 V160 Z" fill="#ff0000"/>
<path d="M804.07,160 V181 A3,3 0 0 0 810.07,181 V160 Z" fill="#ff0000"/>
<path d="M819.59,160 V181 A3,3 0 0 0 825.59,181 V160 Z" fill="#ff0000"/>
<path d="M835.11,160 V181 A3,3 0 0 0 841.11,181 V160 Z" fill="#ff0000"/>
<path d="M850.63,160 V181 A3,3 0 0 0 856.63,181 V160 Z" fill="#ff0000"/>
<path d="M866.15,160 V181 A3,3 0 0 0 872.15,181 V160 Z" fill="#ff0000"/>
<path d="M881.67,160 V181 A3,3 0 0 0 887.67,181 V160 Z" fill="#ff0000"/>
<path d="M897.19,160 V181 A3,3 0 0 0 903.19,181 V160 Z" fill="#ff0000"/>
<path d="M912.71,160 V181 A3,3 0 0 0 918.71,181 V160 Z" fill="#ff0000"/>
<path d="M928.23,160 V181 A3,3 0 0 0 934.23,181 V160 Z" fill="#ff0000"/>
<path d="M943.75,160 V181 A3,3 0 0 0 949.75,181 V160 Z" fill="#ff0000"/>
<path d="M959.27,160 V181 A3,3 0 0 0 965.27,181 V160 Z" fill="#ff0000"/>
<path d="M974.79,160 V181 A3,3 0 0 0 980.79,181 V160 Z" fill="#ff0000"/>
<path d="M990.31,160 V181 A3,3 0 0 0 996.31,181 V160 Z" fill="#ff0000"/>
<path d="M1005.83,160 V181 A3,3 0 0 0 1011.83,181 V160 Z" fill="#ff0000"/>
<path d="M1021.35,160 V181 A3,3 0 0 0 1027.35,181 V160 Z" fill="#ff0000"/>
<path d="M1036.87,160 V181 A3,3 0 0 0 1042.87,181 V160 Z" fill="#ff0000"/>
<path d="M1052.39,160 V181 A3,3 0 0 0 1058.39,181 V160 Z" fill="#ff0000"/>
<path d="M1067.91,160 V181 A3,3 0 0 0 1073.91,181 V160 Z" fill="#ff0000"/>
<path d="M1083.43,160 V181 A3,3 0 0 0 1089.43,181 V160 Z" fill="#ff0000"/>
<path d="M1098.95,160 V181 A3,3 0 0 0 1104.95,181 V160 Z" fill="#ff0000"/>
<path d="M1114.47,160 V181 A3,3 0 0 0 1120.47,181 V160 Z" fill="#ff0000"/>
<path d="M1129.99,160 V181 A3,3 0 0 0 1135.99,181 V160 Z" fill="#ff0000"/>
<path d="M1145.51,160 V181 A3,3 0 0 0 1151.51,181 V160 Z" fill="#ff0000"/>
<path d="M1161.03,160 V181 A3,3 0 0 0 1167.03,181 V160 Z" fill="#ff0000"/>
<path d="M1176.55,160 V181 A3,3 0 0 0 1182.55,181 V160 Z" fill="#ff0000"/>
<path d="M1192.07,160 V181 A3,3 0 0 0 1198.07,181 V160 Z" fill="#ff0000"/>
<path d="M1207.59,158 V140 A3,3 0 0 1 1213.59,140 V158 Z" fill="#30d030"/>
<path d="M1223.11,158 V140 A3,3 0 0 1 1229.11,140 V158 Z" fill="#30d030"/>
<path d="M1238.63,158 V140 A3,3 0 0 1 1244.63,140 V158 Z" fill="#30d030"/>
<path d="M1254.15,160 V181 A3,3 0 0 0 1260.15,181 V160 Z" fill="#ff0000"/>
<path d="M1269.67,160 V181 A3,3 0 0 0 1275.67,181 V160 Z" fill="#ff0000"/>
<path d="M1285.19,160 V181 A3,3 0 0 0 1291.19,181 V160 Z" fill="#ff0000"/>
<path d="M1300.71,160 V181 A3,3 0 0 0 1306.71,181 V160 Z" fill="#ff0000"/>
<path d="M1316.23,160 V181 A3,3 0 0 0 1322.23,181 V160 Z" fill="#ff0000"/>
<path d="M1331.75,160 V181 A3,3 0 0 0 1337.75,181 V160 Z" fill="#ff0000"/>
<path d="M1347.27,160 V181 A3,3 0 0 0 1353.27,181 V160 Z" fill="#ff0000"/>
<path d="M1362.79,160 V181 A3,3 0 0 0 1368.79,181 V160 Z" fill="#ff0000"/>
<path d="M1378.31,160 V181 A3,3 0 0 0 1384.31,181 V160 Z" fill="#ff0000"/>
<path d="M1393.83,160 V181 A3,3 0 0 0 1399.83,181 V160 Z" fill="#ff0000"/>
<path d="M1409.35,160 V181 A3,3 0 0 0 1415.35,181 V160 Z" fill="#ff0000"/>
<path d="M1424.87,160 V181 A3,3 0 0 0 1430.87,181 V160 Z" fill="#ff0000"/>
<path d="M1440.39,158 V140 A3,3 0 0 1 1446.39,140 V158 Z" fill="#30d030"/>
<path d="M1455.91,158 V140 A3,3 0 0 1 1461.91,140 V158 Z" fill="#30d030"/>
<path d="M1471.43,158 V140 A3,3 0 0 1 1477.43,140 V158 Z" fill="#30d030"/>
<path d="M1486.95,158 V140 A3,3 0 0 1 1492.95,140 V158 Z" fill="#30d030"/>
<path d="M1502.47,158 V140 A3,3 0 0 1 1508.47,140 V158 Z" fill="#30d030"/>
<path d="M1517.99,158 V140 A3,3 0 0 1 1523.99,140 V158 Z" fill="#30d030"/>
<path d="M1533.51,158 V140 A3,3 0 0 1 1539.51,140 V158 Z" fill="#30d030"/>
<path d="M1549.03,158 V140 A3,3 0 0 1 1555.03,140 V158 Z" fill="#30d030"/>
<path d="M1564.55,158 V140 A3,3 0 0 1 1570.55,140 V158 Z" fill="#30d030"/>
<path d="M1580.07,158 V140 A3,3 0 0 1 1586.07,140 V158 Z" fill="#30d030"/>
<rect x="37" y="158" width="1546" height="5" fill="#ffff00" />
<circle cx="1583" cy="160.5" r="2.5" fill="#ffff00"/>
<line x1="1583.2" y1="134" x2="1583.2" y2="186" stroke="#ff2020" stroke-width="1.4" stroke-dasharray="4,3.5"/>
<line x1="1854" y1="135" x2="1854" y2="185" stroke="#f0f0f0" stroke-width="1.6" />
<line x1="1854" y1="138.9" x2="1864" y2="138.9" stroke="#f0f0f0" stroke-width="1.6" />
<line x1="1854" y1="148.9" x2="1858.5" y2="148.9" stroke="#f0f0f0" stroke-width="1.6" />
<line x1="1854" y1="160" x2="1864" y2="160" stroke="#f0f0f0" stroke-width="1.6" />
<line x1="1854" y1="171.6" x2="1858.5" y2="171.6" stroke="#f0f0f0" stroke-width="1.6" />
<line x1="1854" y1="181.8" x2="1864" y2="181.8" stroke="#f0f0f0" stroke-width="1.6" />
<text x="1912" y="166.7" font-size="14.5" fill="#f4f0e0" font-family="Liberation Sans" font-weight="normal" text-anchor="end"  >0</text>
<rect x="37" y="220" width="1881" height="79" fill="#000060" />
<polyline points="37.50,250.50 116.00,250.50 117.50,251.20 272.00,251.20 273.50,252.00 540.00,252.00 541.50,250.70 600.00,250.70 601.50,249.50 660.00,249.50 661.50,247.80 787.00,247.80 788.50,246.70 847.00,246.70 848.50,245.60 1000.00,245.60 1001.50,246.90 1100.00,246.90 1101.50,248.00 1140.00,248.00 1141.50,249.30 1187.00,249.30 1188.50,250.60 1267.00,250.60 1268.50,252.00 1470.00,252.00 1471.50,250.70 1583.00,250.70" fill="none" stroke="#f4f0d8" stroke-width="1.6" stroke-linejoin="round" stroke-dasharray="4,3.5"/>
<polyline points="37.50,268.10 116.00,268.10 117.50,267.40 272.00,267.40 273.50,266.60 540.00,266.60 541.50,267.90 600.00,267.90 601.50,269.10 660.00,269.10 661.50,270.80 787.00,270.80 788.50,271.90 847.00,271.90 848.50,273.00 1000.00,273.00 1001.50,271.70 1100.00,271.70 1101.50,270.60 1140.00,270.60 1141.50,269.30 1187.00,269.30 1188.50,268.00 1267.00,268.00 1268.50,266.60 1470.00,266.60 1471.50,267.90 1583.00,267.90" fill="none" stroke="#d8d4c0" stroke-width="1.6" stroke-linejoin="round" stroke-dasharray="4,3.5"/>
<polyline points="38.00,262.50 58.00,262.50 62.00,260.00 120.00,260.00 125.00,255.00 165.00,255.00 170.00,258.00 200.00,256.00 280.00,256.00 285.00,262.50 320.00,262.50 325.00,255.00 370.00,254.00 396.00,253.00 540.00,254.00 550.00,262.00 560.00,268.00 600.00,270.00 640.00,269.00 700.00,266.00 740.00,265.00 760.00,264.00 780.00,270.00 800.00,273.00 835.00,273.00 870.00,270.00 920.00,268.00 960.00,265.00 975.00,259.00 990.00,255.00 1015.00,255.00 1030.00,261.00 1060.00,263.00 1100.00,263.50 1118.00,262.50 1170.00,262.50 1180.00,255.00 1240.00,255.00 1245.00,256.50 1310.00,256.00 1312.00,254.50 1375.00,254.50 1377.00,253.00 1475.00,253.50 1490.00,251.00 1520.00,250.00 1540.00,248.00 1567.00,249.00 1583.00,258.00" fill="none" stroke="#ff6a20" stroke-width="4.5" stroke-linejoin="round" />
<polyline points="38.00,265.50 58.00,265.50 62.00,263.00 120.00,263.00 125.00,258.00 165.00,258.00 170.00,261.00 200.00,259.00 280.00,259.00 285.00,265.50 320.00,265.50 325.00,258.00 370.00,257.00 396.00,256.00 540.00,257.00 550.00,265.00 560.00,271.00 600.00,273.00 640.00,272.00 700.00,269.00 740.00,268.00 760.00,267.00 780.00,273.00 800.00,276.00 835.00,276.00 870.00,273.00 920.00,271.00 960.00,268.00 975.00,262.00 990.00,258.00 1015.00,258.00 1030.00,264.00 1060.00,266.00 1100.00,266.50 1118.00,265.50 1170.00,265.50 1180.00,258.00 1240.00,258.00 1245.00,259.50 1310.00,259.00 1312.00,257.50 1375.00,257.50 1377.00,256.00 1475.00,256.50 1490.00,254.00 1520.00,253.00 1540.00,251.00 1567.00,252.00 1583.00,261.00" fill="none" stroke="#d01010" stroke-width="1.2" stroke-linejoin="round" />
<line x1="1583" y1="259.3" x2="1864" y2="259.3" stroke="#ffffff" stroke-width="1.4" />
<polyline points="38.00,259.30 77.50,259.30 92.50,275.30 107.50,259.30 232.50,259.30 247.50,275.30 262.50,259.30 278.75,259.30 293.75,275.30 308.75,259.30 418.75,259.30 433.75,243.30 448.75,259.30 481.25,259.30 496.25,243.30 511.25,259.30 511.75,259.30 526.75,243.30 541.75,259.30 760.75,259.30 775.75,275.30 790.75,259.30 915.75,259.30 930.75,275.30 945.75,259.30 1040.00,259.30 1055.00,275.30 1070.00,259.30 1583.00,259.30" fill="none" stroke="#88c8e8" stroke-width="3.6" stroke-linejoin="round" />
<polyline points="38.00,290.50 138.75,290.50 155.00,226.50 171.25,290.50 357.50,290.50 372.50,226.50 543.75,226.50 557.50,290.50 1195.00,290.50 1210.00,226.50 1242.50,226.50 1256.25,290.50 1427.50,290.50 1443.75,226.50 1583.00,226.50" fill="none" stroke="#fffbe0" stroke-width="4.2" stroke-linejoin="round" />
<line x1="1854" y1="220" x2="1854" y2="297" stroke="#f0f0f0" stroke-width="1.6" />
<line x1="1854" y1="226.2" x2="1858.5" y2="226.2" stroke="#f0f0f0" stroke-width="1.6" />
<line x1="1854" y1="236.7" x2="1864" y2="236.7" stroke="#f0f0f0" stroke-width="1.6" />
<line x1="1854" y1="247.8" x2="1858.5" y2="247.8" stroke="#f0f0f0" stroke-width="1.6" />
<line x1="1854" y1="259.3" x2="1864" y2="259.3" stroke="#f0f0f0" stroke-width="1.6" />
<line x1="1854" y1="270.7" x2="1858.5" y2="270.7" stroke="#f0f0f0" stroke-width="1.6" />
<line x1="1854" y1="281.8" x2="1864" y2="281.8" stroke="#f0f0f0" stroke-width="1.6" />
<line x1="1854" y1="291.6" x2="1858.5" y2="291.6" stroke="#f0f0f0" stroke-width="1.6" />
<text x="1912" y="243.3" font-size="14.5" fill="#f4f0e0" font-family="Liberation Sans" font-weight="normal" text-anchor="end"  >1000</text>
<text x="1912" y="266.2" font-size="14.5" fill="#f4f0e0" font-family="Liberation Sans" font-weight="normal" text-anchor="end"  >0</text>
<text x="1912" y="288.4" font-size="14.5" fill="#f4f0e0" font-family="Liberation Sans" font-weight="normal" text-anchor="end"  >-1000</text>
<line x1="1583.2" y1="219.5" x2="1583.2" y2="298" stroke="#ff2020" stroke-width="1.4" stroke-dasharray="4,3.5"/>
<rect x="37" y="332.5" width="1881" height="171" fill="#808080" />
<line x1="37.5" y1="400.5" x2="1854" y2="400.5" stroke="#000000" stroke-width="1.2" stroke-dasharray="3.9,3.6"/>
<line x1="37.5" y1="420.5" x2="1854" y2="420.5" stroke="#000000" stroke-width="1.2" stroke-dasharray="3.9,3.6"/>
<line x1="37.5" y1="440.5" x2="1854" y2="440.5" stroke="#000000" stroke-width="1.2" stroke-dasharray="3.9,3.6"/>
<line x1="37.5" y1="460.5" x2="1854" y2="460.5" stroke="#000000" stroke-width="1.2" stroke-dasharray="3.9,3.6"/>
<line x1="37.5" y1="480.5" x2="1854" y2="480.5" stroke="#000000" stroke-width="1.2" stroke-dasharray="3.9,3.6"/>
<polyline points="38.00,450.00 110.00,449.00 150.00,443.00 187.00,452.00 270.00,454.00 310.00,457.50 340.00,452.00 375.00,446.00 480.00,446.00 552.50,457.00 600.00,473.00 640.00,473.00 700.00,464.00 742.50,456.50 760.00,458.00 800.00,470.00 850.00,472.00 900.00,469.00 960.00,462.00 1000.00,455.00 1240.00,455.00 1270.00,458.00 1290.00,460.00 1320.00,460.00 1360.00,452.00 1400.00,445.00 1460.00,440.00 1567.00,440.00 1583.00,447.00" fill="none" stroke="#f0ecd0" stroke-width="1.5" stroke-linejoin="round" />
<polyline points="38.00,447.00 50.00,447.00 60.00,453.00 70.00,448.00 130.00,448.00 145.00,453.00 160.00,447.50 240.00,448.00 310.00,448.00 350.00,453.00 390.00,447.00 540.00,447.00 600.00,446.50 660.00,446.50 730.00,447.00 745.00,453.00 760.00,447.00 950.00,447.00 960.00,452.50 1000.00,455.00 1010.00,449.00 1060.00,449.00 1075.00,453.00 1090.00,456.00 1110.00,452.00 1130.00,455.00 1150.00,452.00 1160.00,449.00 1300.00,449.00 1320.00,453.00 1475.00,453.00 1490.00,455.00 1540.00,455.00 1567.00,455.00 1583.00,446.00" fill="none" stroke="#e8e800" stroke-width="1.5" stroke-linejoin="round" />
<polyline points="38.00,450.00 215.00,450.00 231.00,444.50 246.00,450.00 310.00,450.00 325.00,428.75 340.00,450.00 606.00,450.00 621.00,432.50 635.00,450.00 806.00,450.00 821.00,440.00 836.00,450.00 854.00,450.00 869.00,440.00 884.00,450.00 1008.00,450.00 1022.50,455.00 1038.00,450.00 1287.50,450.00 1302.50,430.00 1318.00,450.00 1473.75,450.00 1488.75,470.00 1505.00,450.00 1567.50,450.00 1583.00,470.00" fill="none" stroke="#000000" stroke-width="2.4" stroke-linejoin="round" />
<polyline points="38.00,370.00 216.00,370.00 230.00,365.00 310.00,365.00 326.00,345.00 402.50,345.00 417.50,455.00 605.00,455.00 621.00,430.00 807.50,430.00 821.00,420.00 854.00,420.00 869.00,410.00 1008.75,410.00 1023.75,455.00 1102.50,455.00 1116.25,445.00 1287.50,445.00 1302.50,425.00 1473.75,425.00 1488.75,470.00 1567.50,470.00 1583.75,490.00" fill="none" stroke="#8c0000" stroke-width="4.2" stroke-linejoin="round" />
<line x1="1583.2" y1="331" x2="1583.2" y2="503" stroke="#ff2020" stroke-width="1.4" stroke-dasharray="4,3.5"/>
<clipPath id="p3clip"><rect x="37" y="332.5" width="1881" height="171"/></clipPath>
<ellipse cx="1574.25" cy="488.5" rx="22.5" ry="15.5" fill="none" stroke="#ff0000" stroke-width="2.2" clip-path="url(#p3clip)"/>
<rect x="37" y="502" width="1820" height="1" fill="#808080" />
<line x1="1854" y1="333" x2="1854" y2="501" stroke="#f0f0f0" stroke-width="1.6" />
<line x1="1854" y1="340" x2="1858.5" y2="340" stroke="#f0f0f0" stroke-width="1.6" />
<line x1="1854" y1="350" x2="1864" y2="350" stroke="#f0f0f0" stroke-width="1.6" />
<line x1="1854" y1="360" x2="1858.5" y2="360" stroke="#f0f0f0" stroke-width="1.6" />
<line x1="1854" y1="370" x2="1858.5" y2="370" stroke="#f0f0f0" stroke-width="1.6" />
<line x1="1854" y1="380" x2="1858.5" y2="380" stroke="#f0f0f0" stroke-width="1.6" />
<line x1="1854" y1="390" x2="1858.5" y2="390" stroke="#f0f0f0" stroke-width="1.6" />
<line x1="1854" y1="400" x2="1864" y2="400" stroke="#f0f0f0" stroke-width="1.6" />
<line x1="1854" y1="410" x2="1858.5" y2="410" stroke="#f0f0f0" stroke-width="1.6" />
<line x1="1854" y1="420" x2="1858.5" y2="420" stroke="#f0f0f0" stroke-width="1.6" />
<line x1="1854" y1="430" x2="1858.5" y2="430" stroke="#f0f0f0" stroke-width="1.6" />
<line x1="1854" y1="440" x2="1858.5" y2="440" stroke="#f0f0f0" stroke-width="1.6" />
<line x1="1854" y1="450" x2="1864" y2="450" stroke="#f0f0f0" stroke-width="1.6" />
<line x1="1854" y1="460" x2="1858.5" y2="460" stroke="#f0f0f0" stroke-width="1.6" />
<line x1="1854" y1="470" x2="1858.5" y2="470" stroke="#f0f0f0" stroke-width="1.6" />
<line x1="1854" y1="480" x2="1858.5" y2="480" stroke="#f0f0f0" stroke-width="1.6" />
<line x1="1854" y1="490" x2="1858.5" y2="490" stroke="#f0f0f0" stroke-width="1.6" />
<line x1="1854" y1="500" x2="1864" y2="500" stroke="#f0f0f0" stroke-width="1.6" />
<text x="1912" y="357.4" font-size="14.5" fill="#f4f0e0" font-family="Liberation Sans" font-weight="normal" text-anchor="end"  >100</text>
<text x="1912" y="408" font-size="14.5" fill="#f4f0e0" font-family="Liberation Sans" font-weight="normal" text-anchor="end"  >50</text>
<text x="1912" y="457.3" font-size="14.5" fill="#f4f0e0" font-family="Liberation Sans" font-weight="normal" text-anchor="end"  >0</text>
<rect x="37" y="537.5" width="1881" height="403.5" fill="#000000" />
<line x1="46.59" y1="612.5" x2="46.59" y2="623" stroke="#8098b8" stroke-width="1.8" />
<rect x="40.59" y="616.5" width="12" height="3" fill="#8098b8" />
<line x1="62.11" y1="600" x2="62.11" y2="602.5" stroke="#8098b8" stroke-width="1.5" />
<rect x="56.61" y="602.5" width="11" height="16.899999999999977" fill="none" stroke="#8098b8" stroke-width="1.6"/>
<line x1="77.63" y1="602" x2="77.63" y2="611" stroke="#e86020" stroke-width="1.8" />
<rect x="71.63" y="601.25" width="12" height="3" fill="#e86020" />
<line x1="93.15" y1="603" x2="93.15" y2="603.75" stroke="#e86020" stroke-width="1.6" />
<line x1="93.15" y1="609.4" x2="93.15" y2="613.75" stroke="#e86020" stroke-width="1.6" />
<rect x="86.85000000000001" y="603.75" width="12.6" height="5.649999999999977" fill="#ff6a1e" />
<line x1="108.67" y1="608" x2="108.67" y2="615.6" stroke="#e86020" stroke-width="1.8" />
<rect x="102.67" y="609.1" width="12" height="3" fill="#e86020" />
<rect x="118.69" y="605.6" width="11" height="7.5" fill="none" stroke="#8098b8" stroke-width="1.6"/>
<rect x="134.21" y="584.4" width="11" height="21.200000000000045" fill="none" stroke="#8098b8" stroke-width="1.6"/>
<line x1="155.23" y1="578" x2="155.23" y2="578.75" stroke="#8098b8" stroke-width="1.5" />
<line x1="155.23" y1="584.4" x2="155.23" y2="588" stroke="#8098b8" stroke-width="1.5" />
<rect x="149.73" y="578.75" width="11" height="5.649999999999977" fill="none" stroke="#8098b8" stroke-width="1.6"/>
<line x1="170.75" y1="603" x2="170.75" y2="603.75" stroke="#e86020" stroke-width="1.6" />
<line x1="170.75" y1="625.6" x2="170.75" y2="629.4" stroke="#e86020" stroke-width="1.6" />
<rect x="164.45" y="603.75" width="12.6" height="21.850000000000023" fill="#ff6a1e" />
<line x1="186.27" y1="620" x2="186.27" y2="631.9" stroke="#8098b8" stroke-width="1.8" />
<rect x="180.27" y="624.1" width="12" height="3" fill="#8098b8" />
<line x1="201.79" y1="617.5" x2="201.79" y2="619.4" stroke="#8098b8" stroke-width="1.5" />
<line x1="201.79" y1="625" x2="201.79" y2="635.6" stroke="#8098b8" stroke-width="1.5" />
<rect x="196.29" y="619.4" width="11" height="5.600000000000023" fill="none" stroke="#8098b8" stroke-width="1.6"/>
<line x1="217.31" y1="612.5" x2="217.31" y2="621.9" stroke="#8098b8" stroke-width="1.8" />
<rect x="211.31" y="616.0" width="12" height="3" fill="#8098b8" />
<line x1="232.82999999999998" y1="604" x2="232.82999999999998" y2="607.5" stroke="#8098b8" stroke-width="1.5" />
<line x1="232.82999999999998" y1="619.4" x2="232.82999999999998" y2="622" stroke="#8098b8" stroke-width="1.5" />
<rect x="227.32999999999998" y="607.5" width="11" height="11.899999999999977" fill="none" stroke="#8098b8" stroke-width="1.6"/>
<line x1="248.35" y1="603.1" x2="248.35" y2="607.25" stroke="#e86020" stroke-width="1.6" />
<rect x="242.04999999999998" y="607.25" width="12.6" height="9.649999999999977" fill="#ff6a1e" />
<line x1="263.87" y1="621.9" x2="263.87" y2="625" stroke="#e86020" stroke-width="1.6" />
<rect x="257.57" y="617.25" width="12.6" height="4.649999999999977" fill="#ff6a1e" />
<line x1="279.39" y1="621" x2="279.39" y2="622.25" stroke="#e86020" stroke-width="1.6" />
<rect x="273.09" y="622.25" width="12.6" height="14.649999999999977" fill="#ff6a1e" />
<rect x="288.60999999999996" y="637.5" width="12.6" height="11.899999999999977" fill="#ff6a1e" />
<line x1="310.43" y1="633.75" x2="310.43" y2="637.75" stroke="#8098b8" stroke-width="1.5" />
<rect x="304.93" y="637.75" width="11" height="12.5" fill="none" stroke="#8098b8" stroke-width="1.6"/>
<line x1="325.95" y1="628.5" x2="325.95" y2="631.5" stroke="#8098b8" stroke-width="1.5" />
<line x1="325.95" y1="638.1" x2="325.95" y2="648.1" stroke="#8098b8" stroke-width="1.5" />
<rect x="320.45" y="631.5" width="11" height="6.600000000000023" fill="none" stroke="#8098b8" stroke-width="1.6"/>
<line x1="341.47" y1="618" x2="341.47" y2="622.5" stroke="#8098b8" stroke-width="1.5" />
<line x1="341.47" y1="631.9" x2="341.47" y2="634" stroke="#8098b8" stroke-width="1.5" />
<rect x="335.97" y="622.5" width="11" height="9.399999999999977" fill="none" stroke="#8098b8" stroke-width="1.6"/>
<line x1="356.99" y1="610" x2="356.99" y2="627.5" stroke="#e86020" stroke-width="1.8" />
<rect x="350.99" y="620.0" width="12" height="3" fill="#e86020" />
<line x1="372.51" y1="596.25" x2="372.51" y2="601.9" stroke="#8098b8" stroke-width="1.5" />
<rect x="367.01" y="601.9" width="11" height="6.2000000000000455" fill="none" stroke="#8098b8" stroke-width="1.6"/>
<line x1="388.03" y1="601.9" x2="388.03" y2="604.4" stroke="#8098b8" stroke-width="1.5" />
<rect x="382.53" y="592.75" width="11" height="9.149999999999977" fill="none" stroke="#8098b8" stroke-width="1.6"/>
<line x1="403.54999999999995" y1="591" x2="403.54999999999995" y2="592.25" stroke="#e86020" stroke-width="1.6" />
<line x1="403.54999999999995" y1="604.4" x2="403.54999999999995" y2="606.9" stroke="#e86020" stroke-width="1.6" />
<rect x="397.24999999999994" y="592.25" width="12.6" height="12.149999999999977" fill="#ff6a1e" />
<line x1="419.07" y1="601" x2="419.07" y2="609.4" stroke="#e86020" stroke-width="1.8" />
<rect x="413.07" y="602.25" width="12" height="3" fill="#e86020" />
<line x1="434.59" y1="600" x2="434.59" y2="606" stroke="#8098b8" stroke-width="1.8" />
<rect x="428.59" y="603.25" width="12" height="3" fill="#8098b8" />
<line x1="450.11" y1="603.75" x2="450.11" y2="606" stroke="#8098b8" stroke-width="1.5" />
<rect x="444.61" y="599.4" width="11" height="4.350000000000023" fill="none" stroke="#8098b8" stroke-width="1.6"/>
<line x1="465.63" y1="596.25" x2="465.63" y2="598.75" stroke="#e86020" stroke-width="1.6" />
<rect x="459.33" y="598.75" width="12.6" height="5.649999999999977" fill="#ff6a1e" />
<line x1="481.15" y1="602" x2="481.15" y2="606" stroke="#8098b8" stroke-width="1.8" />
<rect x="475.15" y="602.9" width="12" height="3" fill="#8098b8" />
<rect x="491.17" y="593.5" width="11" height="10.899999999999977" fill="none" stroke="#8098b8" stroke-width="1.6"/>
<line x1="512.19" y1="645" x2="512.19" y2="658" stroke="#e86020" stroke-width="1.6" />
<rect x="505.89000000000004" y="593.5" width="12.6" height="51.5" fill="#ff6a1e" />
<line x1="527.71" y1="567" x2="527.71" y2="591.5" stroke="#8098b8" stroke-width="1.5" />
<line x1="527.71" y1="646.5" x2="527.71" y2="654.4" stroke="#8098b8" stroke-width="1.5" />
<rect x="522.21" y="591.5" width="11" height="55.0" fill="none" stroke="#8098b8" stroke-width="1.6"/>
<line x1="543.23" y1="583.75" x2="543.23" y2="589.75" stroke="#e86020" stroke-width="1.6" />
<rect x="536.9300000000001" y="589.75" width="12.6" height="57.75" fill="#ff6a1e" />
<line x1="558.75" y1="645" x2="558.75" y2="648.5" stroke="#e86020" stroke-width="1.6" />
<rect x="552.45" y="648.5" width="12.6" height="40.89999999999998" fill="#ff6a1e" />
<line x1="574.27" y1="688.75" x2="574.27" y2="697.5" stroke="#e86020" stroke-width="1.6" />
<line x1="574.27" y1="715.6" x2="574.27" y2="720.6" stroke="#e86020" stroke-width="1.6" />
<rect x="567.97" y="697.5" width="12.6" height="18.100000000000023" fill="#ff6a1e" />
<line x1="589.79" y1="701.25" x2="589.79" y2="710.6" stroke="#8098b8" stroke-width="1.5" />
<line x1="589.79" y1="716.9" x2="589.79" y2="721.9" stroke="#8098b8" stroke-width="1.5" />
<rect x="584.29" y="710.6" width="11" height="6.2999999999999545" fill="none" stroke="#8098b8" stroke-width="1.6"/>
<line x1="605.31" y1="705" x2="605.31" y2="710" stroke="#e86020" stroke-width="1.6" />
<line x1="605.31" y1="724.4" x2="605.31" y2="725.6" stroke="#e86020" stroke-width="1.6" />
<rect x="599.01" y="710" width="12.6" height="14.399999999999977" fill="#ff6a1e" />
<line x1="620.8299999999999" y1="718.75" x2="620.8299999999999" y2="722.5" stroke="#8098b8" stroke-width="1.5" />
<line x1="620.8299999999999" y1="725.6" x2="620.8299999999999" y2="730" stroke="#8098b8" stroke-width="1.5" />
<rect x="615.3299999999999" y="722.5" width="11" height="3.1000000000000227" fill="none" stroke="#8098b8" stroke-width="1.6"/>
<line x1="636.3499999999999" y1="712.5" x2="636.3499999999999" y2="723.75" stroke="#8098b8" stroke-width="1.8" />
<rect x="630.3499999999999" y="720.4" width="12" height="3" fill="#8098b8" />
<line x1="651.87" y1="707.5" x2="651.87" y2="715" stroke="#8098b8" stroke-width="1.5" />
<rect x="646.37" y="715" width="11" height="6.899999999999977" fill="none" stroke="#8098b8" stroke-width="1.6"/>
<line x1="667.39" y1="708.75" x2="667.39" y2="716.25" stroke="#8098b8" stroke-width="1.8" />
<rect x="661.39" y="713.25" width="12" height="3" fill="#8098b8" />
<line x1="682.91" y1="713" x2="682.91" y2="725.6" stroke="#e86020" stroke-width="1.8" />
<rect x="676.91" y="713.25" width="12" height="3" fill="#e86020" />
<line x1="698.43" y1="707.5" x2="698.43" y2="711.9" stroke="#8098b8" stroke-width="1.5" />
<line x1="698.43" y1="716.5" x2="698.43" y2="718" stroke="#8098b8" stroke-width="1.5" />
<rect x="692.93" y="711.9" width="11" height="4.600000000000023" fill="none" stroke="#8098b8" stroke-width="1.6"/>
<line x1="713.9499999999999" y1="710" x2="713.9499999999999" y2="711.25" stroke="#e86020" stroke-width="1.6" />
<line x1="713.9499999999999" y1="723.1" x2="713.9499999999999" y2="728.1" stroke="#e86020" stroke-width="1.6" />
<rect x="707.65" y="711.25" width="12.6" height="11.850000000000023" fill="#ff6a1e" />
<line x1="729.47" y1="710" x2="729.47" y2="712.5" stroke="#8098b8" stroke-width="1.5" />
<line x1="729.47" y1="724.4" x2="729.47" y2="725.6" stroke="#8098b8" stroke-width="1.5" />
<rect x="723.97" y="712.5" width="11" height="11.899999999999977" fill="none" stroke="#8098b8" stroke-width="1.6"/>
<line x1="744.99" y1="696.25" x2="744.99" y2="705" stroke="#8098b8" stroke-width="1.5" />
<rect x="739.49" y="705" width="11" height="8.100000000000023" fill="none" stroke="#8098b8" stroke-width="1.6"/>
<line x1="760.51" y1="690" x2="760.51" y2="705" stroke="#e86020" stroke-width="1.6" />
<rect x="754.21" y="705" width="12.6" height="18.100000000000023" fill="#ff6a1e" />
<rect x="769.73" y="753.75" width="12.6" height="35.75" fill="#ff6a1e" />
<rect x="786.05" y="781.25" width="11" height="9.25" fill="none" stroke="#8098b8" stroke-width="1.6"/>
<rect x="800.77" y="780" width="12.6" height="12" fill="#ff6a1e" />
<line x1="822.59" y1="778.75" x2="822.59" y2="793" stroke="#8098b8" stroke-width="1.8" />
<rect x="816.59" y="790.0" width="12" height="3" fill="#8098b8" />
<line x1="838.11" y1="785" x2="838.11" y2="790" stroke="#e86020" stroke-width="1.6" />
<line x1="838.11" y1="798" x2="838.11" y2="803" stroke="#e86020" stroke-width="1.6" />
<rect x="831.8100000000001" y="790" width="12.6" height="8" fill="#ff6a1e" />
<rect x="847.33" y="798.75" width="12.6" height="16.75" fill="#ff6a1e" />
<rect x="863.65" y="801.25" width="11" height="15.75" fill="none" stroke="#8098b8" stroke-width="1.6"/>
<line x1="884.67" y1="795" x2="884.67" y2="801.25" stroke="#e86020" stroke-width="1.6" />
<rect x="878.37" y="801.25" width="12.6" height="6.75" fill="#ff6a1e" />
<rect x="894.6899999999999" y="804.5" width="11" height="4.5" fill="none" stroke="#8098b8" stroke-width="1.6"/>
<line x1="915.71" y1="801.25" x2="915.71" y2="805" stroke="#e86020" stroke-width="1.6" />
<line x1="915.71" y1="818" x2="915.71" y2="825.5" stroke="#e86020" stroke-width="1.6" />
<rect x="909.4100000000001" y="805" width="12.6" height="13" fill="#ff6a1e" />
<rect x="924.9300000000001" y="818.75" width="12.6" height="13.25" fill="#ff6a1e" />
<line x1="946.75" y1="802.5" x2="946.75" y2="805.5" stroke="#8098b8" stroke-width="1.5" />
<rect x="941.25" y="805.5" width="11" height="27.5" fill="none" stroke="#8098b8" stroke-width="1.6"/>
<rect x="956.77" y="786.25" width="11" height="19.25" fill="none" stroke="#8098b8" stroke-width="1.6"/>
<line x1="977.79" y1="798.75" x2="977.79" y2="804.5" stroke="#8098b8" stroke-width="1.5" />
<rect x="972.29" y="781.25" width="11" height="17.5" fill="none" stroke="#8098b8" stroke-width="1.6"/>
<line x1="993.31" y1="765" x2="993.31" y2="767.5" stroke="#8098b8" stroke-width="1.5" />
<line x1="993.31" y1="783" x2="993.31" y2="792" stroke="#8098b8" stroke-width="1.5" />
<rect x="987.81" y="767.5" width="11" height="15.5" fill="none" stroke="#8098b8" stroke-width="1.6"/>
<line x1="1008.8299999999999" y1="780.5" x2="1008.8299999999999" y2="787" stroke="#e86020" stroke-width="1.6" />
<rect x="1002.53" y="767.5" width="12.6" height="13.0" fill="#ff6a1e" />
<line x1="1024.35" y1="778.75" x2="1024.35" y2="781.25" stroke="#e86020" stroke-width="1.6" />
<rect x="1018.05" y="781.25" width="12.6" height="25.75" fill="#ff6a1e" />
<line x1="1039.87" y1="796" x2="1039.87" y2="798.75" stroke="#8098b8" stroke-width="1.5" />
<rect x="1034.37" y="798.75" width="11" height="9.25" fill="none" stroke="#8098b8" stroke-width="1.6"/>
<rect x="1049.09" y="798.75" width="12.6" height="21.75" fill="#ff6a1e" />
<line x1="1070.9099999999999" y1="808.75" x2="1070.9099999999999" y2="811.25" stroke="#8098b8" stroke-width="1.5" />
<line x1="1070.9099999999999" y1="822" x2="1070.9099999999999" y2="826.25" stroke="#8098b8" stroke-width="1.5" />
<rect x="1065.4099999999999" y="811.25" width="11" height="10.75" fill="none" stroke="#8098b8" stroke-width="1.6"/>
<line x1="1086.4299999999998" y1="830.5" x2="1086.4299999999998" y2="836" stroke="#e86020" stroke-width="1.6" />
<rect x="1080.1299999999999" y="811.25" width="12.6" height="19.25" fill="#ff6a1e" />
<line x1="1101.9499999999998" y1="821" x2="1101.9499999999998" y2="834" stroke="#e86020" stroke-width="1.8" />
<rect x="1095.9499999999998" y="831.0" width="12" height="3" fill="#e86020" />
<line x1="1117.47" y1="816" x2="1117.47" y2="828.75" stroke="#8098b8" stroke-width="1.5" />
<rect x="1111.97" y="828.75" width="11" height="6.25" fill="none" stroke="#8098b8" stroke-width="1.6"/>
<line x1="1132.99" y1="807.5" x2="1132.99" y2="812.5" stroke="#8098b8" stroke-width="1.5" />
<rect x="1127.49" y="812.5" width="11" height="17.0" fill="none" stroke="#8098b8" stroke-width="1.6"/>
<line x1="1148.51" y1="805" x2="1148.51" y2="817.5" stroke="#e86020" stroke-width="1.8" />
<rect x="1142.51" y="809.75" width="12" height="3" fill="#e86020" />
<line x1="1164.03" y1="798.75" x2="1164.03" y2="812" stroke="#e86020" stroke-width="1.6" />
<rect x="1157.73" y="812" width="12.6" height="12.5" fill="#ff6a1e" />
<line x1="1179.55" y1="761" x2="1179.55" y2="782.5" stroke="#8098b8" stroke-width="1.5" />
<rect x="1174.05" y="782.5" width="11" height="12.5" fill="none" stroke="#8098b8" stroke-width="1.6"/>
<line x1="1195.07" y1="798" x2="1195.07" y2="807.5" stroke="#e86020" stroke-width="1.6" />
<rect x="1188.77" y="782.5" width="12.6" height="15.5" fill="#ff6a1e" />
<line x1="1210.59" y1="777.5" x2="1210.59" y2="783.75" stroke="#8098b8" stroke-width="1.5" />
<rect x="1205.09" y="783.75" width="11" height="15.0" fill="none" stroke="#8098b8" stroke-width="1.6"/>
<rect x="1219.81" y="783.75" width="12.6" height="32.5" fill="#ff6a1e" />
<line x1="1241.6299999999999" y1="808.75" x2="1241.6299999999999" y2="816.25" stroke="#e86020" stroke-width="1.6" />
<rect x="1235.33" y="816.25" width="12.6" height="10.75" fill="#ff6a1e" />
<line x1="1257.1499999999999" y1="845.5" x2="1257.1499999999999" y2="855" stroke="#e86020" stroke-width="1.6" />
<rect x="1250.85" y="827.5" width="12.6" height="18.0" fill="#ff6a1e" />
<line x1="1272.67" y1="837.5" x2="1272.67" y2="840" stroke="#8098b8" stroke-width="1.5" />
<rect x="1267.17" y="840" width="11" height="7" fill="none" stroke="#8098b8" stroke-width="1.6"/>
<line x1="1288.19" y1="848" x2="1288.19" y2="852" stroke="#e86020" stroke-width="1.6" />
<rect x="1281.89" y="840" width="12.6" height="8" fill="#ff6a1e" />
<line x1="1303.71" y1="845" x2="1303.71" y2="857.5" stroke="#e86020" stroke-width="1.8" />
<rect x="1297.71" y="848.0" width="12" height="3" fill="#e86020" />
<line x1="1319.23" y1="842.5" x2="1319.23" y2="846.25" stroke="#8098b8" stroke-width="1.5" />
<rect x="1313.73" y="846.25" width="11" height="5.75" fill="none" stroke="#8098b8" stroke-width="1.6"/>
<line x1="1334.75" y1="822.5" x2="1334.75" y2="827.5" stroke="#8098b8" stroke-width="1.5" />
<rect x="1329.25" y="827.5" width="11" height="18.75" fill="none" stroke="#8098b8" stroke-width="1.6"/>
<line x1="1350.27" y1="836.25" x2="1350.27" y2="839.5" stroke="#e86020" stroke-width="1.6" />
<rect x="1343.97" y="827.5" width="12.6" height="8.75" fill="#ff6a1e" />
<line x1="1365.79" y1="827.5" x2="1365.79" y2="833.75" stroke="#8098b8" stroke-width="1.5" />
<line x1="1365.79" y1="837.5" x2="1365.79" y2="845.5" stroke="#8098b8" stroke-width="1.5" />
<rect x="1360.29" y="833.75" width="11" height="3.75" fill="none" stroke="#8098b8" stroke-width="1.6"/>
<line x1="1381.31" y1="818.75" x2="1381.31" y2="825" stroke="#8098b8" stroke-width="1.5" />
<line x1="1381.31" y1="830" x2="1381.31" y2="840" stroke="#8098b8" stroke-width="1.5" />
<rect x="1375.81" y="825" width="11" height="5" fill="none" stroke="#8098b8" stroke-width="1.6"/>
<line x1="1396.83" y1="825" x2="1396.83" y2="835" stroke="#8098b8" stroke-width="1.5" />
<rect x="1391.33" y="805" width="11" height="20" fill="none" stroke="#8098b8" stroke-width="1.6"/>
<line x1="1412.35" y1="792.5" x2="1412.35" y2="801.25" stroke="#8098b8" stroke-width="1.5" />
<rect x="1406.85" y="801.25" width="11" height="3.25" fill="none" stroke="#8098b8" stroke-width="1.6"/>
<line x1="1427.87" y1="786.25" x2="1427.87" y2="795" stroke="#8098b8" stroke-width="1.5" />
<rect x="1422.37" y="795" width="11" height="8" fill="none" stroke="#8098b8" stroke-width="1.6"/>
<line x1="1443.3899999999999" y1="795" x2="1443.3899999999999" y2="801.25" stroke="#8098b8" stroke-width="1.5" />
<rect x="1437.8899999999999" y="783.75" width="11" height="11.25" fill="none" stroke="#8098b8" stroke-width="1.6"/>
<line x1="1458.9099999999999" y1="772.5" x2="1458.9099999999999" y2="784" stroke="#8098b8" stroke-width="1.8" />
<rect x="1452.9099999999999" y="781.5" width="12" height="3" fill="#8098b8" />
<line x1="1474.43" y1="775" x2="1474.43" y2="779.5" stroke="#8098b8" stroke-width="1.5" />
<rect x="1468.93" y="779.5" width="11" height="5.0" fill="none" stroke="#8098b8" stroke-width="1.6"/>
<line x1="1489.95" y1="767.5" x2="1489.95" y2="775.5" stroke="#8098b8" stroke-width="1.5" />
<line x1="1489.95" y1="779.5" x2="1489.95" y2="781.25" stroke="#8098b8" stroke-width="1.5" />
<rect x="1484.45" y="775.5" width="11" height="4.0" fill="none" stroke="#8098b8" stroke-width="1.6"/>
<line x1="1505.47" y1="772.5" x2="1505.47" y2="775" stroke="#e86020" stroke-width="1.6" />
<line x1="1505.47" y1="778.75" x2="1505.47" y2="783.75" stroke="#e86020" stroke-width="1.6" />
<rect x="1499.17" y="775" width="12.6" height="3.75" fill="#ff6a1e" />
<line x1="1520.99" y1="773" x2="1520.99" y2="785" stroke="#8098b8" stroke-width="1.8" />
<rect x="1514.99" y="778.0" width="12" height="3" fill="#8098b8" />
<line x1="1536.51" y1="770" x2="1536.51" y2="773" stroke="#8098b8" stroke-width="1.5" />
<rect x="1531.01" y="773" width="11" height="5.75" fill="none" stroke="#8098b8" stroke-width="1.6"/>
<rect x="1546.53" y="758.75" width="11" height="14.25" fill="none" stroke="#8098b8" stroke-width="1.6"/>
<line x1="1567.55" y1="743.5" x2="1567.55" y2="758" stroke="#e86020" stroke-width="1.6" />
<rect x="1561.25" y="758" width="12.6" height="5.5" fill="#ff6a1e" />
<line x1="1583.07" y1="836" x2="1583.07" y2="850" stroke="#e86020" stroke-width="1.6" />
<rect x="1576.77" y="793.5" width="12.6" height="42.5" fill="#ff6a1e" />
<polyline points="37.25,615.00 45.70,614.00 61.00,592.75 69.75,595.60 83.50,601.00 92.90,607.50 101.00,609.40 108.50,610.00 123.50,601.90 131.00,591.25 138.50,573.10 144.75,571.90 152.25,570.60 154.10,570.60 156.00,573.75 170.40,635.00 186.00,625.60 201.00,611.90 217.25,610.00 231.60,599.40 241.00,606.90 248.50,613.75 256.00,616.90 262.00,620.00 270.00,628.00 286.25,645.00 294.40,651.25 311.25,628.00 326.25,620.00 340.60,612.50 356.25,615.00 371.25,589.40 387.50,581.25 403.10,600.00 418.75,603.10 433.75,599.40 448.75,593.75 465.00,602.50 481.25,603.10 496.90,588.10 511.25,650.00 526.90,566.25 542.50,617.50 556.25,680.00 562.50,690.00 574.40,710.60 589.40,692.50 605.00,715.00 627.50,715.00 636.25,713.75 650.60,706.25 659.40,706.25 667.50,708.10 682.50,712.50 697.50,705.00 713.10,721.90 729.40,705.00 744.40,695.00 760.00,718.75 775.00,803.75 791.25,776.25 806.25,785.00 821.25,773.75 837.50,791.25 852.50,808.75 868.75,792.50 883.75,801.25 898.75,798.75 915.00,818.75 930.00,832.50 945.00,805.00 961.25,768.75 977.50,770.00 993.75,755.00 1008.75,775.00 1023.75,805.00 1038.75,792.50 1055.00,820.00 1070.00,803.75 1086.25,825.00 1101.25,828.75 1117.50,820.00 1132.50,798.75 1147.50,803.75 1163.75,818.75 1178.75,760.00 1193.75,790.00 1210.00,770.00 1225.00,812.50 1241.25,822.50 1257.50,845.00 1272.50,831.25 1287.50,843.75 1302.50,846.25 1318.75,841.25 1333.75,816.25 1350.00,830.00 1365.00,822.50 1380.00,815.00 1396.25,791.25 1411.25,790.00 1426.25,786.25 1442.50,775.00 1458.75,773.75 1473.75,771.25 1488.75,767.50 1505.00,775.00 1520.00,775.00 1536.25,767.50 1552.50,750.00 1567.00,757.00 1583.20,849.50" fill="none" stroke="#ff1010" stroke-width="1.25" stroke-linejoin="round" />
<polyline points="37.25,626.90 44.75,623.75 62.25,602.50 72.25,605.00 81.00,609.40 93.50,616.25 106.60,619.40 123.50,607.50 136.00,584.40 139.75,581.90 154.00,580.00 170.40,647.50 184.75,640.00 201.00,625.60 217.25,623.10 231.60,610.00 248.50,625.00 262.00,628.75 282.50,651.90 294.40,661.90 311.25,639.40 326.25,635.00 340.60,625.00 356.25,629.40 371.25,600.00 387.50,593.10 403.10,613.10 418.75,613.10 433.75,607.50 448.75,601.25 465.00,608.10 481.25,608.10 496.90,593.75 511.25,668.75 526.25,597.50 540.00,665.00 557.50,731.25 574.40,753.10 589.40,724.40 605.60,738.10 621.25,731.25 636.25,725.00 652.50,718.10 666.25,717.50 682.50,722.50 697.50,715.00 713.10,733.10 729.40,718.75 744.40,707.50 760.00,733.75 775.00,822.50 791.25,795.00 806.25,803.75 821.25,796.25 837.50,807.50 853.75,827.50 868.75,805.00 885.00,815.00 900.00,810.00 915.00,828.75 930.00,843.75 946.25,807.50 965.00,786.25 977.50,787.50 993.75,773.75 1008.75,793.75 1023.75,826.25 1038.75,810.00 1055.00,833.75 1070.00,817.50 1086.25,845.00 1101.25,843.75 1117.50,835.00 1132.50,813.75 1147.50,816.25 1163.75,836.25 1178.75,782.50 1193.75,808.75 1210.00,788.75 1225.00,833.75 1241.25,842.50 1257.50,863.75 1272.50,850.00 1287.50,856.25 1302.50,860.00 1318.75,852.50 1333.75,828.75 1351.25,845.00 1365.00,840.00 1380.00,832.50 1396.25,807.50 1411.25,806.25 1426.25,802.50 1442.50,793.75 1458.75,792.50 1473.75,786.25 1488.75,780.00 1505.00,786.25 1520.00,783.75 1536.25,775.00 1552.50,758.75 1567.00,766.00 1583.20,866.00" fill="none" stroke="#28c028" stroke-width="1.25" stroke-linejoin="round" />
<path d="M1579.3,707 H1585.2 V720 H1591.6 L1582.3,730 L1573,720 H1579.3 Z" fill="#ff0000"/>
<line x1="1583.2" y1="537" x2="1583.2" y2="893" stroke="#ff2020" stroke-width="1.4" stroke-dasharray="4,3.5"/>
<line x1="38.5" y1="893.3" x2="46.0" y2="900.7" stroke="#c00000" stroke-width="1.5" />
<line x1="48.55" y1="893.3" x2="56.05" y2="900.7" stroke="#c00000" stroke-width="1.5" />
<line x1="58.599999999999994" y1="893.3" x2="66.1" y2="900.7" stroke="#c00000" stroke-width="1.5" />
<line x1="68.64999999999999" y1="893.3" x2="76.14999999999999" y2="900.7" stroke="#c00000" stroke-width="1.5" />
<line x1="78.69999999999999" y1="893.3" x2="86.19999999999999" y2="900.7" stroke="#c00000" stroke-width="1.5" />
<line x1="88.74999999999999" y1="893.3" x2="96.24999999999999" y2="900.7" stroke="#c00000" stroke-width="1.5" />
<line x1="98.79999999999998" y1="893.3" x2="106.29999999999998" y2="900.7" stroke="#c00000" stroke-width="1.5" />
<line x1="108.84999999999998" y1="893.3" x2="116.34999999999998" y2="900.7" stroke="#c00000" stroke-width="1.5" />
<line x1="118.89999999999998" y1="893.3" x2="126.39999999999998" y2="900.7" stroke="#c00000" stroke-width="1.5" />
<line x1="128.95" y1="893.3" x2="136.45" y2="900.7" stroke="#c00000" stroke-width="1.5" />
<line x1="139.0" y1="893.3" x2="146.5" y2="900.7" stroke="#c00000" stroke-width="1.5" />
<line x1="149.05" y1="900.7" x2="156.55" y2="893.3" stroke="#008000" stroke-width="1.5" />
<line x1="159.10000000000002" y1="900.7" x2="166.60000000000002" y2="893.3" stroke="#008000" stroke-width="1.5" />
<line x1="169.15000000000003" y1="893.3" x2="176.65000000000003" y2="900.7" stroke="#c00000" stroke-width="1.5" />
<line x1="179.20000000000005" y1="893.3" x2="186.70000000000005" y2="900.7" stroke="#c00000" stroke-width="1.5" />
<line x1="189.25000000000006" y1="893.3" x2="196.75000000000006" y2="900.7" stroke="#c00000" stroke-width="1.5" />
<line x1="199.30000000000007" y1="893.3" x2="206.80000000000007" y2="900.7" stroke="#c00000" stroke-width="1.5" />
<line x1="209.35000000000008" y1="893.3" x2="216.85000000000008" y2="900.7" stroke="#c00000" stroke-width="1.5" />
<line x1="219.4000000000001" y1="893.3" x2="226.9000000000001" y2="900.7" stroke="#c00000" stroke-width="1.5" />
<line x1="229.4500000000001" y1="893.3" x2="236.9500000000001" y2="900.7" stroke="#c00000" stroke-width="1.5" />
<line x1="239.5000000000001" y1="893.3" x2="247.0000000000001" y2="900.7" stroke="#c00000" stroke-width="1.5" />
<line x1="249.55000000000013" y1="893.3" x2="257.0500000000001" y2="900.7" stroke="#c00000" stroke-width="1.5" />
<line x1="259.60000000000014" y1="893.3" x2="267.10000000000014" y2="900.7" stroke="#c00000" stroke-width="1.5" />
<line x1="269.65000000000015" y1="893.3" x2="277.15000000000015" y2="900.7" stroke="#c00000" stroke-width="1.5" />
<line x1="279.70000000000016" y1="893.3" x2="287.20000000000016" y2="900.7" stroke="#c00000" stroke-width="1.5" />
<line x1="289.75000000000017" y1="893.3" x2="297.25000000000017" y2="900.7" stroke="#c00000" stroke-width="1.5" />
<line x1="299.8000000000002" y1="893.3" x2="307.3000000000002" y2="900.7" stroke="#c00000" stroke-width="1.5" />
<line x1="309.8500000000002" y1="893.3" x2="317.3500000000002" y2="900.7" stroke="#c00000" stroke-width="1.5" />
<line x1="319.9000000000002" y1="893.3" x2="327.4000000000002" y2="900.7" stroke="#c00000" stroke-width="1.5" />
<line x1="329.9500000000002" y1="893.3" x2="337.4500000000002" y2="900.7" stroke="#c00000" stroke-width="1.5" />
<line x1="340.0000000000002" y1="893.3" x2="347.5000000000002" y2="900.7" stroke="#c00000" stroke-width="1.5" />
<line x1="350.05000000000024" y1="893.3" x2="357.55000000000024" y2="900.7" stroke="#c00000" stroke-width="1.5" />
<line x1="360.10000000000025" y1="893.3" x2="367.60000000000025" y2="900.7" stroke="#c00000" stroke-width="1.5" />
<line x1="370.15000000000026" y1="900.7" x2="377.65000000000026" y2="893.3" stroke="#008000" stroke-width="1.5" />
<line x1="380.2000000000003" y1="900.7" x2="387.7000000000003" y2="893.3" stroke="#008000" stroke-width="1.5" />
<line x1="390.2500000000003" y1="900.7" x2="397.7500000000003" y2="893.3" stroke="#008000" stroke-width="1.5" />
<line x1="400.3000000000003" y1="900.7" x2="407.8000000000003" y2="893.3" stroke="#008000" stroke-width="1.5" />
<line x1="410.3500000000003" y1="900.7" x2="417.8500000000003" y2="893.3" stroke="#008000" stroke-width="1.5" />
<line x1="420.4000000000003" y1="900.7" x2="427.9000000000003" y2="893.3" stroke="#008000" stroke-width="1.5" />
<line x1="430.45000000000033" y1="900.7" x2="437.95000000000033" y2="893.3" stroke="#008000" stroke-width="1.5" />
<line x1="440.50000000000034" y1="900.7" x2="448.00000000000034" y2="893.3" stroke="#008000" stroke-width="1.5" />
<line x1="450.55000000000035" y1="900.7" x2="458.05000000000035" y2="893.3" stroke="#008000" stroke-width="1.5" />
<line x1="460.60000000000036" y1="900.7" x2="468.10000000000036" y2="893.3" stroke="#008000" stroke-width="1.5" />
<line x1="470.6500000000004" y1="900.7" x2="478.1500000000004" y2="893.3" stroke="#008000" stroke-width="1.5" />
<line x1="480.7000000000004" y1="900.7" x2="488.2000000000004" y2="893.3" stroke="#008000" stroke-width="1.5" />
<line x1="490.7500000000004" y1="900.7" x2="498.2500000000004" y2="893.3" stroke="#008000" stroke-width="1.5" />
<line x1="500.8000000000004" y1="900.7" x2="508.3000000000004" y2="893.3" stroke="#008000" stroke-width="1.5" />
<line x1="510.8500000000004" y1="900.7" x2="518.3500000000004" y2="893.3" stroke="#008000" stroke-width="1.5" />
<line x1="520.9000000000004" y1="900.7" x2="528.4000000000004" y2="893.3" stroke="#008000" stroke-width="1.5" />
<line x1="530.9500000000004" y1="900.7" x2="538.4500000000004" y2="893.3" stroke="#008000" stroke-width="1.5" />
<line x1="541.0000000000003" y1="900.7" x2="548.5000000000003" y2="893.3" stroke="#008000" stroke-width="1.5" />
<line x1="551.0500000000003" y1="893.3" x2="558.5500000000003" y2="900.7" stroke="#c00000" stroke-width="1.5" />
<line x1="561.1000000000003" y1="893.3" x2="568.6000000000003" y2="900.7" stroke="#c00000" stroke-width="1.5" />
<line x1="571.1500000000002" y1="893.3" x2="578.6500000000002" y2="900.7" stroke="#c00000" stroke-width="1.5" />
<line x1="581.2000000000002" y1="893.3" x2="588.7000000000002" y2="900.7" stroke="#c00000" stroke-width="1.5" />
<line x1="591.2500000000001" y1="893.3" x2="598.7500000000001" y2="900.7" stroke="#c00000" stroke-width="1.5" />
<line x1="601.3000000000001" y1="893.3" x2="608.8000000000001" y2="900.7" stroke="#c00000" stroke-width="1.5" />
<line x1="611.35" y1="893.3" x2="618.85" y2="900.7" stroke="#c00000" stroke-width="1.5" />
<line x1="621.4" y1="893.3" x2="628.9" y2="900.7" stroke="#c00000" stroke-width="1.5" />
<line x1="631.4499999999999" y1="893.3" x2="638.9499999999999" y2="900.7" stroke="#c00000" stroke-width="1.5" />
<line x1="641.4999999999999" y1="893.3" x2="648.9999999999999" y2="900.7" stroke="#c00000" stroke-width="1.5" />
<line x1="651.5499999999998" y1="893.3" x2="659.0499999999998" y2="900.7" stroke="#c00000" stroke-width="1.5" />
<line x1="661.5999999999998" y1="893.3" x2="669.0999999999998" y2="900.7" stroke="#c00000" stroke-width="1.5" />
<line x1="671.6499999999997" y1="893.3" x2="679.1499999999997" y2="900.7" stroke="#c00000" stroke-width="1.5" />
<line x1="681.6999999999997" y1="893.3" x2="689.1999999999997" y2="900.7" stroke="#c00000" stroke-width="1.5" />
<line x1="691.7499999999997" y1="893.3" x2="699.2499999999997" y2="900.7" stroke="#c00000" stroke-width="1.5" />
<line x1="701.7999999999996" y1="893.3" x2="709.2999999999996" y2="900.7" stroke="#c00000" stroke-width="1.5" />
<line x1="711.8499999999996" y1="893.3" x2="719.3499999999996" y2="900.7" stroke="#c00000" stroke-width="1.5" />
<line x1="721.8999999999995" y1="893.3" x2="729.3999999999995" y2="900.7" stroke="#c00000" stroke-width="1.5" />
<line x1="731.9499999999995" y1="893.3" x2="739.4499999999995" y2="900.7" stroke="#c00000" stroke-width="1.5" />
<line x1="741.9999999999994" y1="893.3" x2="749.4999999999994" y2="900.7" stroke="#c00000" stroke-width="1.5" />
<line x1="752.0499999999994" y1="893.3" x2="759.5499999999994" y2="900.7" stroke="#c00000" stroke-width="1.5" />
<line x1="762.0999999999993" y1="893.3" x2="769.5999999999993" y2="900.7" stroke="#c00000" stroke-width="1.5" />
<line x1="772.1499999999993" y1="893.3" x2="779.6499999999993" y2="900.7" stroke="#c00000" stroke-width="1.5" />
<line x1="782.1999999999992" y1="893.3" x2="789.6999999999992" y2="900.7" stroke="#c00000" stroke-width="1.5" />
<line x1="792.2499999999992" y1="893.3" x2="799.7499999999992" y2="900.7" stroke="#c00000" stroke-width="1.5" />
<line x1="802.2999999999992" y1="893.3" x2="809.7999999999992" y2="900.7" stroke="#c00000" stroke-width="1.5" />
<line x1="812.3499999999991" y1="893.3" x2="819.8499999999991" y2="900.7" stroke="#c00000" stroke-width="1.5" />
<line x1="822.3999999999991" y1="893.3" x2="829.8999999999991" y2="900.7" stroke="#c00000" stroke-width="1.5" />
<line x1="832.449999999999" y1="893.3" x2="839.949999999999" y2="900.7" stroke="#c00000" stroke-width="1.5" />
<line x1="842.499999999999" y1="893.3" x2="849.999999999999" y2="900.7" stroke="#c00000" stroke-width="1.5" />
<line x1="852.5499999999989" y1="893.3" x2="860.0499999999989" y2="900.7" stroke="#c00000" stroke-width="1.5" />
<line x1="862.5999999999989" y1="893.3" x2="870.0999999999989" y2="900.7" stroke="#c00000" stroke-width="1.5" />
<line x1="872.6499999999988" y1="893.3" x2="880.1499999999988" y2="900.7" stroke="#c00000" stroke-width="1.5" />
<line x1="882.6999999999988" y1="893.3" x2="890.1999999999988" y2="900.7" stroke="#c00000" stroke-width="1.5" />
<line x1="892.7499999999987" y1="893.3" x2="900.2499999999987" y2="900.7" stroke="#c00000" stroke-width="1.5" />
<line x1="902.7999999999987" y1="893.3" x2="910.2999999999987" y2="900.7" stroke="#c00000" stroke-width="1.5" />
<line x1="912.8499999999987" y1="893.3" x2="920.3499999999987" y2="900.7" stroke="#c00000" stroke-width="1.5" />
<line x1="922.8999999999986" y1="893.3" x2="930.3999999999986" y2="900.7" stroke="#c00000" stroke-width="1.5" />
<line x1="932.9499999999986" y1="893.3" x2="940.4499999999986" y2="900.7" stroke="#c00000" stroke-width="1.5" />
<line x1="942.9999999999985" y1="893.3" x2="950.4999999999985" y2="900.7" stroke="#c00000" stroke-width="1.5" />
<line x1="953.0499999999985" y1="893.3" x2="960.5499999999985" y2="900.7" stroke="#c00000" stroke-width="1.5" />
<line x1="963.0999999999984" y1="893.3" x2="970.5999999999984" y2="900.7" stroke="#c00000" stroke-width="1.5" />
<line x1="973.1499999999984" y1="893.3" x2="980.6499999999984" y2="900.7" stroke="#c00000" stroke-width="1.5" />
<line x1="983.1999999999983" y1="893.3" x2="990.6999999999983" y2="900.7" stroke="#c00000" stroke-width="1.5" />
<line x1="993.2499999999983" y1="893.3" x2="1000.7499999999983" y2="900.7" stroke="#c00000" stroke-width="1.5" />
<line x1="1003.2999999999982" y1="893.3" x2="1010.7999999999982" y2="900.7" stroke="#c00000" stroke-width="1.5" />
<line x1="1013.3499999999982" y1="893.3" x2="1020.8499999999982" y2="900.7" stroke="#c00000" stroke-width="1.5" />
<line x1="1023.3999999999982" y1="893.3" x2="1030.8999999999983" y2="900.7" stroke="#c00000" stroke-width="1.5" />
<line x1="1033.4499999999982" y1="893.3" x2="1040.9499999999982" y2="900.7" stroke="#c00000" stroke-width="1.5" />
<line x1="1043.4999999999982" y1="893.3" x2="1050.9999999999982" y2="900.7" stroke="#c00000" stroke-width="1.5" />
<line x1="1053.5499999999981" y1="893.3" x2="1061.0499999999981" y2="900.7" stroke="#c00000" stroke-width="1.5" />
<line x1="1063.599999999998" y1="893.3" x2="1071.099999999998" y2="900.7" stroke="#c00000" stroke-width="1.5" />
<line x1="1073.649999999998" y1="893.3" x2="1081.149999999998" y2="900.7" stroke="#c00000" stroke-width="1.5" />
<line x1="1083.699999999998" y1="893.3" x2="1091.199999999998" y2="900.7" stroke="#c00000" stroke-width="1.5" />
<line x1="1093.749999999998" y1="893.3" x2="1101.249999999998" y2="900.7" stroke="#c00000" stroke-width="1.5" />
<line x1="1103.799999999998" y1="893.3" x2="1111.299999999998" y2="900.7" stroke="#c00000" stroke-width="1.5" />
<line x1="1113.8499999999979" y1="893.3" x2="1121.3499999999979" y2="900.7" stroke="#c00000" stroke-width="1.5" />
<line x1="1123.8999999999978" y1="893.3" x2="1131.3999999999978" y2="900.7" stroke="#c00000" stroke-width="1.5" />
<line x1="1133.9499999999978" y1="893.3" x2="1141.4499999999978" y2="900.7" stroke="#c00000" stroke-width="1.5" />
<line x1="1143.9999999999977" y1="893.3" x2="1151.4999999999977" y2="900.7" stroke="#c00000" stroke-width="1.5" />
<line x1="1154.0499999999977" y1="893.3" x2="1161.5499999999977" y2="900.7" stroke="#c00000" stroke-width="1.5" />
<line x1="1164.0999999999976" y1="893.3" x2="1171.5999999999976" y2="900.7" stroke="#c00000" stroke-width="1.5" />
<line x1="1174.1499999999976" y1="893.3" x2="1181.6499999999976" y2="900.7" stroke="#c00000" stroke-width="1.5" />
<line x1="1184.1999999999975" y1="893.3" x2="1191.6999999999975" y2="900.7" stroke="#c00000" stroke-width="1.5" />
<line x1="1194.2499999999975" y1="893.3" x2="1201.7499999999975" y2="900.7" stroke="#c00000" stroke-width="1.5" />
<line x1="1204.2999999999975" y1="900.7" x2="1211.7999999999975" y2="893.3" stroke="#008000" stroke-width="1.5" />
<line x1="1214.3499999999974" y1="900.7" x2="1221.8499999999974" y2="893.3" stroke="#008000" stroke-width="1.5" />
<line x1="1224.3999999999974" y1="900.7" x2="1231.8999999999974" y2="893.3" stroke="#008000" stroke-width="1.5" />
<line x1="1234.4499999999973" y1="900.7" x2="1241.9499999999973" y2="893.3" stroke="#008000" stroke-width="1.5" />
<line x1="1244.4999999999973" y1="900.7" x2="1251.9999999999973" y2="893.3" stroke="#008000" stroke-width="1.5" />
<line x1="1254.5499999999972" y1="893.3" x2="1262.0499999999972" y2="900.7" stroke="#c00000" stroke-width="1.5" />
<line x1="1264.5999999999972" y1="893.3" x2="1272.0999999999972" y2="900.7" stroke="#c00000" stroke-width="1.5" />
<line x1="1274.6499999999971" y1="893.3" x2="1282.1499999999971" y2="900.7" stroke="#c00000" stroke-width="1.5" />
<line x1="1284.699999999997" y1="893.3" x2="1292.199999999997" y2="900.7" stroke="#c00000" stroke-width="1.5" />
<line x1="1294.749999999997" y1="893.3" x2="1302.249999999997" y2="900.7" stroke="#c00000" stroke-width="1.5" />
<line x1="1304.799999999997" y1="893.3" x2="1312.299999999997" y2="900.7" stroke="#c00000" stroke-width="1.5" />
<line x1="1314.849999999997" y1="893.3" x2="1322.349999999997" y2="900.7" stroke="#c00000" stroke-width="1.5" />
<line x1="1324.899999999997" y1="893.3" x2="1332.399999999997" y2="900.7" stroke="#c00000" stroke-width="1.5" />
<line x1="1334.9499999999969" y1="893.3" x2="1342.4499999999969" y2="900.7" stroke="#c00000" stroke-width="1.5" />
<line x1="1344.9999999999968" y1="893.3" x2="1352.4999999999968" y2="900.7" stroke="#c00000" stroke-width="1.5" />
<line x1="1355.0499999999968" y1="893.3" x2="1362.5499999999968" y2="900.7" stroke="#c00000" stroke-width="1.5" />
<line x1="1365.0999999999967" y1="893.3" x2="1372.5999999999967" y2="900.7" stroke="#c00000" stroke-width="1.5" />
<line x1="1375.1499999999967" y1="893.3" x2="1382.6499999999967" y2="900.7" stroke="#c00000" stroke-width="1.5" />
<line x1="1385.1999999999966" y1="893.3" x2="1392.6999999999966" y2="900.7" stroke="#c00000" stroke-width="1.5" />
<line x1="1395.2499999999966" y1="893.3" x2="1402.7499999999966" y2="900.7" stroke="#c00000" stroke-width="1.5" />
<line x1="1405.2999999999965" y1="893.3" x2="1412.7999999999965" y2="900.7" stroke="#c00000" stroke-width="1.5" />
<line x1="1415.3499999999965" y1="893.3" x2="1422.8499999999965" y2="900.7" stroke="#c00000" stroke-width="1.5" />
<line x1="1425.3999999999965" y1="893.3" x2="1432.8999999999965" y2="900.7" stroke="#c00000" stroke-width="1.5" />
<line x1="1435.4499999999964" y1="893.3" x2="1442.9499999999964" y2="900.7" stroke="#c00000" stroke-width="1.5" />
<line x1="1445.4999999999964" y1="900.7" x2="1452.9999999999964" y2="893.3" stroke="#008000" stroke-width="1.5" />
<line x1="1455.5499999999963" y1="900.7" x2="1463.0499999999963" y2="893.3" stroke="#008000" stroke-width="1.5" />
<line x1="1465.5999999999963" y1="900.7" x2="1473.0999999999963" y2="893.3" stroke="#008000" stroke-width="1.5" />
<line x1="1475.6499999999962" y1="900.7" x2="1483.1499999999962" y2="893.3" stroke="#008000" stroke-width="1.5" />
<line x1="1485.6999999999962" y1="900.7" x2="1493.1999999999962" y2="893.3" stroke="#008000" stroke-width="1.5" />
<line x1="1495.7499999999961" y1="900.7" x2="1503.2499999999961" y2="893.3" stroke="#008000" stroke-width="1.5" />
<line x1="1505.799999999996" y1="900.7" x2="1513.299999999996" y2="893.3" stroke="#008000" stroke-width="1.5" />
<line x1="1515.849999999996" y1="900.7" x2="1523.349999999996" y2="893.3" stroke="#008000" stroke-width="1.5" />
<line x1="1525.899999999996" y1="900.7" x2="1533.399999999996" y2="893.3" stroke="#008000" stroke-width="1.5" />
<line x1="1535.949999999996" y1="900.7" x2="1543.449999999996" y2="893.3" stroke="#008000" stroke-width="1.5" />
<line x1="1545.999999999996" y1="900.7" x2="1553.499999999996" y2="893.3" stroke="#008000" stroke-width="1.5" />
<line x1="1556.0499999999959" y1="900.7" x2="1563.5499999999959" y2="893.3" stroke="#008000" stroke-width="1.5" />
<line x1="1566.0999999999958" y1="900.7" x2="1573.5999999999958" y2="893.3" stroke="#008000" stroke-width="1.5" />
<line x1="1576.1499999999958" y1="900.7" x2="1583.6499999999958" y2="893.3" stroke="#008000" stroke-width="1.5" />
<line x1="1586.1999999999957" y1="900.7" x2="1593.6999999999957" y2="893.3" stroke="#008000" stroke-width="1.5" />
<line x1="1596.2499999999957" y1="900.7" x2="1603.7499999999957" y2="893.3" stroke="#008000" stroke-width="1.5" />
<rect x="84.75" y="892.6" width="8" height="2" fill="#0000e0" />
<rect x="257.25" y="892.6" width="8" height="2" fill="#0000e0" />
<rect x="451" y="892.6" width="8" height="2" fill="#0000e0" />
<rect x="869.75" y="892.6" width="8" height="2" fill="#0000e0" />
<rect x="1219.75" y="892.6" width="8" height="2" fill="#0000e0" />
<rect x="1334.75" y="892.6" width="8" height="2" fill="#0000e0" />
<rect x="1511" y="892.6" width="8" height="2" fill="#0000e0" />
<line x1="1854.5" y1="537" x2="1854.5" y2="873.3" stroke="#f0f0f0" stroke-width="1.6" />
<line x1="1854.5" y1="539.04" x2="1859.0" y2="539.04" stroke="#f0f0f0" stroke-width="1.6" />
<line x1="1854.5" y1="549.155" x2="1859.0" y2="549.155" stroke="#f0f0f0" stroke-width="1.6" />
<line x1="1854.5" y1="559.27" x2="1859.0" y2="559.27" stroke="#f0f0f0" stroke-width="1.6" />
<line x1="1854.5" y1="569.385" x2="1859.0" y2="569.385" stroke="#f0f0f0" stroke-width="1.6" />
<line x1="1854.5" y1="579.5" x2="1864.5" y2="579.5" stroke="#f0f0f0" stroke-width="1.6" />
<line x1="1854.5" y1="589.615" x2="1859.0" y2="589.615" stroke="#f0f0f0" stroke-width="1.6" />
<line x1="1854.5" y1="599.73" x2="1859.0" y2="599.73" stroke="#f0f0f0" stroke-width="1.6" />
<line x1="1854.5" y1="609.845" x2="1859.0" y2="609.845" stroke="#f0f0f0" stroke-width="1.6" />
<line x1="1854.5" y1="619.96" x2="1859.0" y2="619.96" stroke="#f0f0f0" stroke-width="1.6" />
<line x1="1854.5" y1="630.075" x2="1864.5" y2="630.075" stroke="#f0f0f0" stroke-width="1.6" />
<line x1="1854.5" y1="640.19" x2="1859.0" y2="640.19" stroke="#f0f0f0" stroke-width="1.6" />
<line x1="1854.5" y1="650.3050000000001" x2="1859.0" y2="650.3050000000001" stroke="#f0f0f0" stroke-width="1.6" />
<line x1="1854.5" y1="660.42" x2="1859.0" y2="660.42" stroke="#f0f0f0" stroke-width="1.6" />
<line x1="1854.5" y1="670.535" x2="1859.0" y2="670.535" stroke="#f0f0f0" stroke-width="1.6" />
<line x1="1854.5" y1="680.65" x2="1864.5" y2="680.65" stroke="#f0f0f0" stroke-width="1.6" />
<line x1="1854.5" y1="690.765" x2="1859.0" y2="690.765" stroke="#f0f0f0" stroke-width="1.6" />
<line x1="1854.5" y1="700.88" x2="1859.0" y2="700.88" stroke="#f0f0f0" stroke-width="1.6" />
<line x1="1854.5" y1="710.995" x2="1859.0" y2="710.995" stroke="#f0f0f0" stroke-width="1.6" />
<line x1="1854.5" y1="721.11" x2="1859.0" y2="721.11" stroke="#f0f0f0" stroke-width="1.6" />
<line x1="1854.5" y1="731.225" x2="1864.5" y2="731.225" stroke="#f0f0f0" stroke-width="1.6" />
<line x1="1854.5" y1="741.34" x2="1859.0" y2="741.34" stroke="#f0f0f0" stroke-width="1.6" />
<line x1="1854.5" y1="751.455" x2="1859.0" y2="751.455" stroke="#f0f0f0" stroke-width="1.6" />
<line x1="1854.5" y1="761.57" x2="1859.0" y2="761.57" stroke="#f0f0f0" stroke-width="1.6" />
<line x1="1854.5" y1="771.685" x2="1859.0" y2="771.685" stroke="#f0f0f0" stroke-width="1.6" />
<line x1="1854.5" y1="781.8" x2="1864.5" y2="781.8" stroke="#f0f0f0" stroke-width="1.6" />
<line x1="1854.5" y1="791.915" x2="1859.0" y2="791.915" stroke="#f0f0f0" stroke-width="1.6" />
<line x1="1854.5" y1="802.03" x2="1859.0" y2="802.03" stroke="#f0f0f0" stroke-width="1.6" />
<line x1="1854.5" y1="812.145" x2="1859.0" y2="812.145" stroke="#f0f0f0" stroke-width="1.6" />
<line x1="1854.5" y1="822.26" x2="1859.0" y2="822.26" stroke="#f0f0f0" stroke-width="1.6" />
<line x1="1854.5" y1="832.375" x2="1864.5" y2="832.375" stroke="#f0f0f0" stroke-width="1.6" />
<line x1="1854.5" y1="842.49" x2="1859.0" y2="842.49" stroke="#f0f0f0" stroke-width="1.6" />
<line x1="1854.5" y1="852.605" x2="1859.0" y2="852.605" stroke="#f0f0f0" stroke-width="1.6" />
<line x1="1854.5" y1="862.72" x2="1859.0" y2="862.72" stroke="#f0f0f0" stroke-width="1.6" />
<line x1="1854.5" y1="872.835" x2="1859.0" y2="872.835" stroke="#f0f0f0" stroke-width="1.6" />
<line x1="1854.5" y1="873.3" x2="1918" y2="873.3" stroke="#b4b4b4" stroke-width="1.4" />
<text x="1912.5" y="586.3" font-size="14.8" fill="#f4f0e0" font-family="Liberation Sans" font-weight="normal" text-anchor="end" textLength="34.70" lengthAdjust="spacingAndGlyphs" >3900</text>
<text x="1912.5" y="636.875" font-size="14.8" fill="#f4f0e0" font-family="Liberation Sans" font-weight="normal" text-anchor="end" textLength="34.70" lengthAdjust="spacingAndGlyphs" >3850</text>
<text x="1912.5" y="687.4499999999999" font-size="14.8" fill="#f4f0e0" font-family="Liberation Sans" font-weight="normal" text-anchor="end" textLength="34.70" lengthAdjust="spacingAndGlyphs" >3800</text>
<text x="1912.5" y="738.025" font-size="14.8" fill="#f4f0e0" font-family="Liberation Sans" font-weight="normal" text-anchor="end" textLength="34.70" lengthAdjust="spacingAndGlyphs" >3750</text>
<text x="1912.5" y="788.5999999999999" font-size="14.8" fill="#f4f0e0" font-family="Liberation Sans" font-weight="normal" text-anchor="end" textLength="34.70" lengthAdjust="spacingAndGlyphs" >3700</text>
<rect x="1860" y="825.8" width="57.8" height="21" fill="#000000" stroke="#f0f0f0" stroke-width="1.4"/>
<text x="1862" y="841" font-size="13.8" fill="#ff1010" font-family="Liberation Sans" font-weight="normal" text-anchor="start" textLength="54.70" lengthAdjust="spacingAndGlyphs" >3645.700</text>
<line x1="37" y1="901.5" x2="1854" y2="901.5" stroke="#f0f0f0" stroke-width="1.6" />
<line x1="37" y1="921.5" x2="1854" y2="921.5" stroke="#f0f0f0" stroke-width="1.6" />
<line x1="170.5" y1="901" x2="170.5" y2="923.4" stroke="#f0f0f0" stroke-width="1.6" />
<text x="172.7" y="917.3" font-size="15.5" fill="#f4f0e0" font-family="Liberation Sans" font-weight="normal" text-anchor="start" textLength="17.20" lengthAdjust="spacingAndGlyphs" >20</text>
<line x1="372" y1="901" x2="372" y2="923.4" stroke="#f0f0f0" stroke-width="1.6" />
<text x="374.2" y="917.3" font-size="15.5" fill="#f4f0e0" font-family="Liberation Sans" font-weight="normal" text-anchor="start" textLength="17.20" lengthAdjust="spacingAndGlyphs" >21</text>
<line x1="574.5" y1="901" x2="574.5" y2="923.4" stroke="#f0f0f0" stroke-width="1.6" />
<text x="576.7" y="917.3" font-size="15.5" fill="#f4f0e0" font-family="Liberation Sans" font-weight="normal" text-anchor="start" textLength="17.20" lengthAdjust="spacingAndGlyphs" >22</text>
<line x1="775.75" y1="901" x2="775.75" y2="923.4" stroke="#f0f0f0" stroke-width="1.6" />
<text x="777.95" y="917.3" font-size="15.5" fill="#f4f0e0" font-family="Liberation Sans" font-weight="normal" text-anchor="start" textLength="17.20" lengthAdjust="spacingAndGlyphs" >23</text>
<line x1="978" y1="901" x2="978" y2="923.4" stroke="#f0f0f0" stroke-width="1.6" />
<text x="980.2" y="917.3" font-size="15.5" fill="#f4f0e0" font-family="Liberation Sans" font-weight="normal" text-anchor="start" textLength="17.20" lengthAdjust="spacingAndGlyphs" >26</text>
<line x1="1179.5" y1="901" x2="1179.5" y2="923.4" stroke="#f0f0f0" stroke-width="1.6" />
<text x="1181.7" y="917.3" font-size="15.5" fill="#f4f0e0" font-family="Liberation Sans" font-weight="normal" text-anchor="start" textLength="17.20" lengthAdjust="spacingAndGlyphs" >27</text>
<line x1="1380.75" y1="901" x2="1380.75" y2="923.4" stroke="#f0f0f0" stroke-width="1.6" />
<text x="1382.95" y="917.3" font-size="15.5" fill="#f4f0e0" font-family="Liberation Sans" font-weight="normal" text-anchor="start" textLength="17.20" lengthAdjust="spacingAndGlyphs" >28</text>
<line x1="1583.25" y1="901" x2="1583.25" y2="923.4" stroke="#f0f0f0" stroke-width="1.6" />
<text x="1585.45" y="917.3" font-size="15.5" fill="#f4f0e0" font-family="Liberation Sans" font-weight="normal" text-anchor="start" textLength="17.20" lengthAdjust="spacingAndGlyphs" >29</text>
<line x1="62.11" y1="901" x2="62.11" y2="908.2" stroke="#f0f0f0" stroke-width="1.6" />
<line x1="93.15" y1="901" x2="93.15" y2="908.2" stroke="#f0f0f0" stroke-width="1.6" />
<line x1="124.19" y1="901" x2="124.19" y2="908.2" stroke="#f0f0f0" stroke-width="1.6" />
<line x1="155.23" y1="901" x2="155.23" y2="908.2" stroke="#f0f0f0" stroke-width="1.6" />
<line x1="201.79" y1="901" x2="201.79" y2="908.2" stroke="#f0f0f0" stroke-width="1.6" />
<line x1="232.82999999999998" y1="901" x2="232.82999999999998" y2="908.2" stroke="#f0f0f0" stroke-width="1.6" />
<line x1="263.87" y1="901" x2="263.87" y2="908.2" stroke="#f0f0f0" stroke-width="1.6" />
<line x1="294.90999999999997" y1="901" x2="294.90999999999997" y2="908.2" stroke="#f0f0f0" stroke-width="1.6" />
<line x1="325.95" y1="901" x2="325.95" y2="908.2" stroke="#f0f0f0" stroke-width="1.6" />
<line x1="356.99" y1="901" x2="356.99" y2="908.2" stroke="#f0f0f0" stroke-width="1.6" />
<line x1="403.54999999999995" y1="901" x2="403.54999999999995" y2="908.2" stroke="#f0f0f0" stroke-width="1.6" />
<line x1="434.59" y1="901" x2="434.59" y2="908.2" stroke="#f0f0f0" stroke-width="1.6" />
<line x1="465.63" y1="901" x2="465.63" y2="908.2" stroke="#f0f0f0" stroke-width="1.6" />
<line x1="496.67" y1="901" x2="496.67" y2="908.2" stroke="#f0f0f0" stroke-width="1.6" />
<line x1="527.71" y1="901" x2="527.71" y2="908.2" stroke="#f0f0f0" stroke-width="1.6" />
<line x1="558.75" y1="901" x2="558.75" y2="908.2" stroke="#f0f0f0" stroke-width="1.6" />
<line x1="605.31" y1="901" x2="605.31" y2="908.2" stroke="#f0f0f0" stroke-width="1.6" />
<line x1="636.3499999999999" y1="901" x2="636.3499999999999" y2="908.2" stroke="#f0f0f0" stroke-width="1.6" />
<line x1="667.39" y1="901" x2="667.39" y2="908.2" stroke="#f0f0f0" stroke-width="1.6" />
<line x1="698.43" y1="901" x2="698.43" y2="908.2" stroke="#f0f0f0" stroke-width="1.6" />
<line x1="729.47" y1="901" x2="729.47" y2="908.2" stroke="#f0f0f0" stroke-width="1.6" />
<line x1="760.51" y1="901" x2="760.51" y2="908.2" stroke="#f0f0f0" stroke-width="1.6" />
<line x1="807.0699999999999" y1="901" x2="807.0699999999999" y2="908.2" stroke="#f0f0f0" stroke-width="1.6" />
<line x1="838.11" y1="901" x2="838.11" y2="908.2" stroke="#f0f0f0" stroke-width="1.6" />
<line x1="869.15" y1="901" x2="869.15" y2="908.2" stroke="#f0f0f0" stroke-width="1.6" />
<line x1="900.1899999999999" y1="901" x2="900.1899999999999" y2="908.2" stroke="#f0f0f0" stroke-width="1.6" />
<line x1="931.23" y1="901" x2="931.23" y2="908.2" stroke="#f0f0f0" stroke-width="1.6" />
<line x1="962.27" y1="901" x2="962.27" y2="908.2" stroke="#f0f0f0" stroke-width="1.6" />
<line x1="1008.8299999999999" y1="901" x2="1008.8299999999999" y2="908.2" stroke="#f0f0f0" stroke-width="1.6" />
<line x1="1039.87" y1="901" x2="1039.87" y2="908.2" stroke="#f0f0f0" stroke-width="1.6" />
<line x1="1070.9099999999999" y1="901" x2="1070.9099999999999" y2="908.2" stroke="#f0f0f0" stroke-width="1.6" />
<line x1="1101.9499999999998" y1="901" x2="1101.9499999999998" y2="908.2" stroke="#f0f0f0" stroke-width="1.6" />
<line x1="1132.99" y1="901" x2="1132.99" y2="908.2" stroke="#f0f0f0" stroke-width="1.6" />
<line x1="1164.03" y1="901" x2="1164.03" y2="908.2" stroke="#f0f0f0" stroke-width="1.6" />
<line x1="1210.59" y1="901" x2="1210.59" y2="908.2" stroke="#f0f0f0" stroke-width="1.6" />
<line x1="1241.6299999999999" y1="901" x2="1241.6299999999999" y2="908.2" stroke="#f0f0f0" stroke-width="1.6" />
<line x1="1272.67" y1="901" x2="1272.67" y2="908.2" stroke="#f0f0f0" stroke-width="1.6" />
<line x1="1303.71" y1="901" x2="1303.71" y2="908.2" stroke="#f0f0f0" stroke-width="1.6" />
<line x1="1334.75" y1="901" x2="1334.75" y2="908.2" stroke="#f0f0f0" stroke-width="1.6" />
<line x1="1365.79" y1="901" x2="1365.79" y2="908.2" stroke="#f0f0f0" stroke-width="1.6" />
<line x1="1412.35" y1="901" x2="1412.35" y2="908.2" stroke="#f0f0f0" stroke-width="1.6" />
<line x1="1443.3899999999999" y1="901" x2="1443.3899999999999" y2="908.2" stroke="#f0f0f0" stroke-width="1.6" />
<line x1="1474.43" y1="901" x2="1474.43" y2="908.2" stroke="#f0f0f0" stroke-width="1.6" />
<line x1="1505.47" y1="901" x2="1505.47" y2="908.2" stroke="#f0f0f0" stroke-width="1.6" />
<line x1="1536.51" y1="901" x2="1536.51" y2="908.2" stroke="#f0f0f0" stroke-width="1.6" />
<line x1="1567.55" y1="901" x2="1567.55" y2="908.2" stroke="#f0f0f0" stroke-width="1.6" />
<line x1="1614.11" y1="901" x2="1614.11" y2="908.2" stroke="#f0f0f0" stroke-width="1.6" />
<line x1="1645.1499999999999" y1="901" x2="1645.1499999999999" y2="908.2" stroke="#f0f0f0" stroke-width="1.6" />
<line x1="1676.19" y1="901" x2="1676.19" y2="908.2" stroke="#f0f0f0" stroke-width="1.6" />
<line x1="1707.23" y1="901" x2="1707.23" y2="908.2" stroke="#f0f0f0" stroke-width="1.6" />
<line x1="1738.27" y1="901" x2="1738.27" y2="908.2" stroke="#f0f0f0" stroke-width="1.6" />
<line x1="1769.31" y1="901" x2="1769.31" y2="908.2" stroke="#f0f0f0" stroke-width="1.6" />
<line x1="1800.35" y1="901" x2="1800.35" y2="908.2" stroke="#f0f0f0" stroke-width="1.6" />
<line x1="1831.3899999999999" y1="901" x2="1831.3899999999999" y2="908.2" stroke="#f0f0f0" stroke-width="1.6" />
<rect x="1856" y="903.8" width="64" height="37.5" fill="#e8e8e8" stroke="#c0c0c0" stroke-width="1"/>
<circle cx="1884.5" cy="920.75" r="9.5" fill="none" stroke="#20e020" stroke-width="1.8"/>
<circle cx="1881" cy="918" r="1.4" fill="#20e020"/><circle cx="1888" cy="918" r="1.4" fill="#20e020"/>
<path d="M1879,922.5 Q1884.5,928 1890,922.5" fill="none" stroke="#20e020" stroke-width="1.6"/>
<rect x="37" y="941" width="1883" height="1.6" fill="#505050" />
<rect x="37" y="942.6" width="1883" height="1.2" fill="#a0a0a0" />
<rect x="37" y="943.8" width="1883" height="27.2" fill="#f0f0f0" />
<rect x="1458.75" y="953" width="182.5" height="6.5" fill="#8a8a8a" />
<line x1="1665.75" y1="947" x2="1665.75" y2="966" stroke="#909090" stroke-width="1.2" />
<line x1="1725.75" y1="947" x2="1725.75" y2="966" stroke="#909090" stroke-width="1.2" />
<line x1="1838.25" y1="947" x2="1838.25" y2="966" stroke="#909090" stroke-width="1.2" />
<path d="M1676,955 A6,6 0 0 1 1688,953 M1688,957 A6,6 0 0 1 1676,959" fill="none" stroke="#505050" stroke-width="2.6"/>
<path d="M1686,949 L1690,954 L1684,954 Z M1678,963 L1674,958 L1680,958 Z" fill="#505050"/>
<line x1="1708.75" y1="950" x2="1708.75" y2="962" stroke="#606060" stroke-width="2" />
<line x1="1742.5" y1="949" x2="1742.5" y2="964" stroke="#505050" stroke-width="2.2" />
<path d="M1738.5,953 L1742.5,948 L1746.5,953 Z M1738.5,960 L1742.5,965 L1746.5,960 Z" fill="#505050"/>
<line x1="1761" y1="956.25" x2="1777" y2="956.25" stroke="#505050" stroke-width="2.4" />
<line x1="1769" y1="948" x2="1769" y2="964.5" stroke="#505050" stroke-width="2.4" />
<path d="M1765,951 L1769,947 L1773,951 Z M1765,961 L1769,965 L1773,961 Z M1764,952 L1760,956.25 L1764,960 Z M1774,952 L1778,956.25 L1774,960 Z" fill="#505050"/>
<circle cx="1795" cy="956.25" r="6.5" fill="none" stroke="#606060" stroke-width="1.6"/>
<line x1="1791.5" y1="956.25" x2="1798.5" y2="956.25" stroke="#505050" stroke-width="2" />
<circle cx="1821.25" cy="956.25" r="6.5" fill="none" stroke="#606060" stroke-width="1.6"/>
<line x1="1817.75" y1="956.25" x2="1824.75" y2="956.25" stroke="#505050" stroke-width="2" />
<line x1="1821.25" y1="952.75" x2="1821.25" y2="959.75" stroke="#505050" stroke-width="2" />
<path d="M1858,951 L1852,956.25 L1858,961.5 Z" fill="#c8c8c8"/><path d="M1878,951 L1884,956.25 L1878,961.5 Z" fill="#c8c8c8"/>
<rect x="1899.5" y="949.5" width="14" height="13" fill="#f8f8f8" stroke="#606060" stroke-width="1.2"/>
<line x1="1902" y1="953" x2="1911" y2="953" stroke="#606060" stroke-width="1" />
<line x1="1902" y1="956" x2="1911" y2="956" stroke="#606060" stroke-width="1" />
<line x1="1902" y1="959" x2="1911" y2="959" stroke="#606060" stroke-width="1" />
<rect x="0" y="971" width="1920" height="41.4" fill="#e9e9e9" />
<line x1="0" y1="971.5" x2="1920" y2="971.5" stroke="#f8f8f8" stroke-width="1" />
<line x1="0" y1="1011.6" x2="1920" y2="1011.6" stroke="#c4c4c4" stroke-width="1.2" />
<rect x="1" y="975" width="8" height="34" fill="url(#grip)" />
<rect x="3.5" y="990.5" width="3" height="3" fill="#707070" />
<rect x="10.5" y="981.5" width="161.5" height="24" rx="2" fill="#ffffff" stroke="#a8a8a8" stroke-width="1"/>
<line x1="30" y1="994.25" x2="131.25" y2="994.25" stroke="#404040" stroke-width="1.6" />
<polyline points="156.50,991.50 161.00,996.00 165.50,991.50" fill="none" stroke="#505050" stroke-width="1.4" stroke-linejoin="round" />
<line x1="175.75" y1="978" x2="175.75" y2="1008" stroke="#a0a0a0" stroke-width="1.2" />
<rect x="180.5" y="981.5" width="124" height="24" rx="2" fill="#ffffff" stroke="#a8a8a8" stroke-width="1"/>
<line x1="195" y1="994.25" x2="268.75" y2="994.25" stroke="#404040" stroke-width="1.6" />
<polyline points="289.00,991.50 293.50,996.00 298.00,991.50" fill="none" stroke="#505050" stroke-width="1.4" stroke-linejoin="round" />
<line x1="313.75" y1="975" x2="313.75" y2="1009" stroke="#b0b0b0" stroke-width="1.2" />
<rect x="321" y="975" width="8" height="34" fill="url(#grip)" />
<rect x="323.5" y="990.5" width="3" height="3" fill="#707070" />
<line x1="331" y1="976" x2="331" y2="1009" stroke="#a0a0a0" stroke-width="1" />
<rect x="333" y="978" width="133" height="32" fill="#e4e4e4" />
<rect x="334.5" y="980.5" width="12.5" height="12" fill="#e0e0f8" stroke="#c0c0c0" stroke-width="0.8"/>
<rect x="349.5" y="980.5" width="12.5" height="12" fill="#ffc000" stroke="#c0c0c0" stroke-width="0.8"/>
<rect x="364.5" y="980.5" width="12.5" height="12" fill="#ffff00" stroke="#c0c0c0" stroke-width="0.8"/>
<rect x="379.5" y="980.5" width="12.5" height="12" fill="#606060" stroke="#c0c0c0" stroke-width="0.8"/>
<rect x="394.5" y="980.5" width="12.5" height="12" fill="#30c830" stroke="#c0c0c0" stroke-width="0.8"/>
<rect x="409.5" y="980.5" width="12.5" height="12" fill="#fffad8" stroke="#c0c0c0" stroke-width="0.8"/>
<rect x="424.5" y="980.5" width="12.5" height="12" fill="#ff6a20" stroke="#c0c0c0" stroke-width="0.8"/>
<rect x="439.5" y="980.5" width="12.5" height="12" fill="#90f090" stroke="#c0c0c0" stroke-width="0.8"/>
<rect x="334.5" y="995.5" width="12.5" height="12" fill="#800000" stroke="#c0c0c0" stroke-width="0.8"/>
<rect x="349.5" y="995.5" width="12.5" height="12" fill="#607888" stroke="#c0c0c0" stroke-width="0.8"/>
<rect x="364.5" y="995.5" width="12.5" height="12" fill="#0000ff" stroke="#c0c0c0" stroke-width="0.8"/>
<rect x="379.5" y="995.5" width="12.5" height="12" fill="#008000" stroke="#c0c0c0" stroke-width="0.8"/>
<rect x="394.5" y="995.5" width="12.5" height="12" fill="#ff0000" stroke="#c0c0c0" stroke-width="0.8"/>
<rect x="409.5" y="995.5" width="12.5" height="12" fill="#000000" stroke="#c0c0c0" stroke-width="0.8"/>
<rect x="424.5" y="995.5" width="12.5" height="12" fill="#3a7aa0" stroke="#c0c0c0" stroke-width="0.8"/>
<rect x="439.5" y="995.5" width="12.5" height="12" fill="#88d0e8" stroke="#c0c0c0" stroke-width="0.8"/>
<rect x="394.5" y="995.5" width="12.5" height="12" fill="none" stroke="#ffffff" stroke-width="1" stroke-dasharray="1.5,1.5"/>
<path d="M455,993 L461,993 L458,997 Z" fill="#202020"/>
<line x1="474.5" y1="975" x2="474.5" y2="1009" stroke="#b0b0b0" stroke-width="1.2" />
<rect x="482" y="975" width="8" height="34" fill="url(#grip)" />
<rect x="484.5" y="990.5" width="3" height="3" fill="#707070" />
<line x1="491" y1="976" x2="491" y2="1009" stroke="#a0a0a0" stroke-width="1" />
<rect x="499.25" y="987.5" width="20" height="15.5" fill="#ffffff" stroke="#7090b0" stroke-width="1"/>
<rect x="499.75" y="988" width="19" height="2" fill="#b8d0e8" />
<polyline points="501.75,999.00 504.75,995.00 506.75,997.00" fill="none" stroke="#d03030" stroke-width="1.2" stroke-linejoin="round" />
<text x="508.75" y="1001" font-size="11" fill="#303030" font-family="Liberation Serif" font-weight="normal" text-anchor="start"  >1</text>
<rect x="533.0" y="987.5" width="20" height="15.5" fill="#ffffff" stroke="#7090b0" stroke-width="1"/>
<rect x="533.5" y="988" width="19" height="2" fill="#b8d0e8" />
<polyline points="535.50,999.00 538.50,995.00 540.50,997.00" fill="none" stroke="#d03030" stroke-width="1.2" stroke-linejoin="round" />
<text x="542.5" y="1001" font-size="11" fill="#303030" font-family="Liberation Serif" font-weight="normal" text-anchor="start"  >2</text>
<rect x="566.75" y="987.5" width="20" height="15.5" fill="#ffffff" stroke="#7090b0" stroke-width="1"/>
<rect x="567.25" y="988" width="19" height="2" fill="#b8d0e8" />
<polyline points="569.25,999.00 572.25,995.00 574.25,997.00" fill="none" stroke="#d03030" stroke-width="1.2" stroke-linejoin="round" />
<text x="576.25" y="1001" font-size="11" fill="#303030" font-family="Liberation Serif" font-weight="normal" text-anchor="start"  >3</text>
<rect x="600.5" y="987.5" width="20" height="15.5" fill="#ffffff" stroke="#7090b0" stroke-width="1"/>
<rect x="601.0" y="988" width="19" height="2" fill="#b8d0e8" />
<polyline points="603.00,999.00 606.00,995.00 608.00,997.00" fill="none" stroke="#d03030" stroke-width="1.2" stroke-linejoin="round" />
<text x="610.0" y="1001" font-size="11" fill="#303030" font-family="Liberation Serif" font-weight="normal" text-anchor="start"  >4</text>
<rect x="634.25" y="987.5" width="20" height="15.5" fill="#ffffff" stroke="#7090b0" stroke-width="1"/>
<rect x="634.75" y="988" width="19" height="2" fill="#b8d0e8" />
<polyline points="636.75,999.00 639.75,995.00 641.75,997.00" fill="none" stroke="#d03030" stroke-width="1.2" stroke-linejoin="round" />
<text x="643.75" y="1001" font-size="11" fill="#303030" font-family="Liberation Serif" font-weight="normal" text-anchor="start"  >5</text>
<rect x="668.0" y="987.5" width="20" height="15.5" fill="#ffffff" stroke="#7090b0" stroke-width="1"/>
<rect x="668.5" y="988" width="19" height="2" fill="#b8d0e8" />
<polyline points="670.50,999.00 673.50,995.00 675.50,997.00" fill="none" stroke="#d03030" stroke-width="1.2" stroke-linejoin="round" />
<text x="677.5" y="1001" font-size="11" fill="#303030" font-family="Liberation Serif" font-weight="normal" text-anchor="start"  >6</text>
<line x1="703.75" y1="975" x2="703.75" y2="1009" stroke="#b0b0b0" stroke-width="1.2" />
<rect x="0" y="1011" width="1920" height="1.2" fill="#b4b4b4" />
<rect x="0" y="1012.2" width="1920" height="1.8" fill="#f2f2f2" />
<rect x="0" y="1014" width="1920" height="6" fill="#424242" />
<rect x="1840" y="1017" width="25.3" height="3" fill="#fafafa" />
<rect x="1869.4" y="1017" width="26.2" height="3" fill="#f0f0f0" />
<rect x="0" y="1020" width="1920" height="60" fill="url(#taskg)" />
<circle cx="48" cy="1044" r="7" fill="#f4a010"/>
<path d="M30,1058 Q26,1058 27,1053 Q28,1049 33,1049 Q35,1043 42,1044 Q48,1045 48,1050 Q55,1050 55,1054 Q55,1058 51,1058 Z" fill="#dce8f4" stroke="#b8c8d8" stroke-width="0.8"/>
<text x="65.5" y="1046.25" font-size="14.5" fill="#ffffff" font-family="Liberation Sans" font-weight="normal" text-anchor="start" textLength="29.00" lengthAdjust="spacingAndGlyphs" >18°C</text>
<text x="65.5" y="1065.5" font-size="14.5" fill="#d8d8d8" font-family="Liberation Sans" font-weight="normal" text-anchor="start" textLength="89.50" lengthAdjust="spacingAndGlyphs" >Ger. Nublado</text>
<rect x="506" y="1036" width="13.5" height="13.5" fill="#48b8f0" rx="1"/>
<rect x="521" y="1036" width="13.5" height="13.5" fill="#48b8f0" rx="1"/>
<rect x="506" y="1051" width="13.5" height="13.5" fill="#48b8f0" rx="1"/>
<rect x="521" y="1051" width="13.5" height="13.5" fill="#48b8f0" rx="1"/>
<circle cx="578" cy="1048" r="9" fill="#2a2a2a" stroke="#e8e8e8" stroke-width="3"/>
<line x1="571" y1="1055" x2="564" y2="1062" stroke="#e8e8e8" stroke-width="3.2" />
<circle cx="630" cy="1049" r="14" fill="#6a60d8"/>
<path d="M617,1057 L616,1064 L624,1060 Z" fill="#6a60d8"/>
<rect x="622" y="1043" width="12" height="11" fill="#ffffff" rx="2"/>
<path d="M634,1047 L640,1043 V1054 L634,1050 Z" fill="#ffffff"/>
<rect x="681" y="1039" width="19" height="22" fill="#ffffff" rx="1"/>
<rect x="672" y="1036" width="17" height="28" fill="#2b5ab0" />
<text x="673.5" y="1056" font-size="13" fill="#ffffff" font-family="Liberation Sans" font-weight="bold" text-anchor="start"  >W</text>
<line x1="690" y1="1043" x2="698" y2="1043" stroke="#2b5ab0" stroke-width="1.5" />
<line x1="690" y1="1047" x2="698" y2="1047" stroke="#2b5ab0" stroke-width="1.5" />
<line x1="690" y1="1051" x2="698" y2="1051" stroke="#2b5ab0" stroke-width="1.5" />
<line x1="690" y1="1055" x2="698" y2="1055" stroke="#2b5ab0" stroke-width="1.5" />
<rect x="726.25" y="1035.5" width="29.5" height="29.5" rx="1.5" fill="url(#msg)"/>
<path d="M733.25,1063.00 L734.05,1052.00 L737.65,1052.00 L736.85,1063.00 Z" fill="#f8a818"/>
<path d="M738.25,1063.00 L739.05,1044.50 L743.25,1044.50 L742.45,1063.00 Z" fill="#f89020"/>
<path d="M743.45,1063.00 L744.25,1037.50 L748.85,1037.50 L748.05,1063.00 Z" fill="#f07020"/>
<rect x="781" y="1039" width="30" height="24" fill="#f8c830" rx="2"/>
<rect x="781" y="1036" width="12" height="6" fill="#e8b020" rx="1"/>
<rect x="788" y="1055" width="16" height="5" fill="#2a80d8" />
<circle cx="851" cy="1050" r="14" fill="#e04030"/>
<path d="M851,1050 L838.876,1057.0 A14,14 0 0 0 858.0,1062.124 Z" fill="#30a050"/>
<path d="M851,1050 L858.0,1062.124 A14,14 0 0 0 865,1049.99 L863.6,1043.7 Z" fill="#f8c020"/>
<circle cx="851" cy="1050" r="6.3" fill="#ffffff"/><circle cx="851" cy="1050" r="4.8999999999999995" fill="#3a78e0"/>
<circle cx="861.25" cy="1038.75" r="9.5" fill="#f07a20"/>
<text x="857" y="1043.5" font-size="11" fill="#ffffff" font-family="Liberation Sans" font-weight="bold" text-anchor="start"  >N</text>
<rect x="903" y="1038" width="17" height="24" fill="#ffffff" rx="1"/>
<rect x="892" y="1036" width="19" height="28" fill="#d04a28" />
<text x="894" y="1056" font-size="14" fill="#ffffff" font-family="Liberation Sans" font-weight="bold" text-anchor="start"  >P</text>
<circle cx="913" cy="1047" r="4" fill="none" stroke="#d04a28" stroke-width="2"/>
<path d="M960,1036 L972,1064 H946 Z" fill="#f08010"/>
<rect x="951" y="1049" width="18" height="4" fill="#ffffff" />
<rect x="948" y="1058" width="24" height="5" fill="#f8a040" />
<circle cx="1016" cy="1050" r="14.5" fill="#1a8ad8"/>
<path d="M1003,1046 Q1010,1034 1024,1040 Q1031,1046 1028,1052 H1012 Q1014,1060 1026,1058 Q1018,1066 1008,1060 Q1002,1054 1003,1046 Z" fill="#48d070"/>
<path d="M1010,1050 Q1014,1044 1022,1048 L1012,1052 Z" fill="#1a5aa8"/>
<rect x="1067" y="1039" width="18" height="22" fill="#ffffff" rx="1"/>
<rect x="1057" y="1036" width="18" height="28" fill="#3a5ab8" />
<text x="1059.5" y="1056" font-size="13" fill="#ffffff" font-family="Liberation Sans" font-weight="bold" text-anchor="start"  >V</text>
<rect x="1076" y="1042" width="6" height="6" fill="none" stroke="#3a5ab8" stroke-width="1.3"/>
<rect x="1122" y="1039" width="17" height="22" fill="#ffffff" rx="1"/>
<rect x="1112" y="1036" width="18" height="28" fill="#1d7a40" />
<text x="1114" y="1056" font-size="13" fill="#ffffff" font-family="Liberation Sans" font-weight="bold" text-anchor="start"  >X</text>
<line x1="1131" y1="1043" x2="1138" y2="1043" stroke="#1d7a40" stroke-width="1.5" />
<line x1="1131" y1="1047" x2="1138" y2="1047" stroke="#1d7a40" stroke-width="1.5" />
<line x1="1131" y1="1051" x2="1138" y2="1051" stroke="#1d7a40" stroke-width="1.5" />
<line x1="1131" y1="1055" x2="1138" y2="1055" stroke="#1d7a40" stroke-width="1.5" />
<circle cx="1180.5" cy="1050" r="14" fill="#e04030"/>
<path d="M1180.5,1050 L1168.376,1057.0 A14,14 0 0 0 1187.5,1062.124 Z" fill="#30a050"/>
<path d="M1180.5,1050 L1187.5,1062.124 A14,14 0 0 0 1194.5,1049.99 L1193.1,1043.7 Z" fill="#f8c020"/>
<circle cx="1180.5" cy="1050" r="6.3" fill="#ffffff"/><circle cx="1180.5" cy="1050" r="4.8999999999999995" fill="#3a78e0"/>
<rect x="1224" y="1035" width="23.5" height="30" fill="#6a7a8a" rx="2"/>
<rect x="1226" y="1037" width="19.5" height="6" fill="#50c8f0" />
<rect x="1227.0" y="1046" width="5" height="4.5" fill="#e8eef4" />
<rect x="1233.5" y="1046" width="5" height="4.5" fill="#e8eef4" />
<rect x="1240.0" y="1046" width="5" height="4.5" fill="#e8eef4" />
<rect x="1227.0" y="1052" width="5" height="4.5" fill="#e8eef4" />
<rect x="1233.5" y="1052" width="5" height="4.5" fill="#e8eef4" />
<rect x="1240.0" y="1052" width="5" height="4.5" fill="#e8eef4" />
<rect x="1227.0" y="1058" width="5" height="4.5" fill="#e8eef4" />
<rect x="1233.5" y="1058" width="5" height="4.5" fill="#e8eef4" />
<rect x="1240.0" y="1058" width="5" height="4.5" fill="#e8eef4" />
<rect x="1240" y="1046" width="5" height="16" fill="#1a5a9a" />
<rect x="1276.25" y="1035" width="30" height="30" fill="#1a8080" />
<path d="M1283,1060 H1300 L1298,1054 Q1304,1046 1298,1043 Q1294,1041 1291.5,1045 Q1289,1041 1285,1043 Q1279,1046 1285,1054 Z" fill="#ffffff"/>
<line x1="1291.5" y1="1036" x2="1291.5" y2="1042" stroke="#101010" stroke-width="1.6" />
<line x1="1289" y1="1038.5" x2="1294" y2="1038.5" stroke="#101010" stroke-width="1.6" />
<rect x="1321.25" y="1025" width="49.25" height="49.5" fill="#34323a" rx="4"/>
<rect x="1331.25" y="1035.5" width="29.5" height="29.5" rx="1.5" fill="url(#msg)"/>
<path d="M1338.25,1063.00 L1339.05,1052.00 L1342.65,1052.00 L1341.85,1063.00 Z" fill="#f8a818"/>
<path d="M1343.25,1063.00 L1344.05,1044.50 L1348.25,1044.50 L1347.45,1063.00 Z" fill="#f89020"/>
<path d="M1348.45,1063.00 L1349.25,1037.50 L1353.85,1037.50 L1353.05,1063.00 Z" fill="#f07020"/>
<rect x="1336.25" y="1070.5" width="19.5" height="3" fill="#48b8f0" rx="1.5"/>
<rect x="1387" y="1036" width="28.5" height="28.5" rx="3" fill="none" stroke="#8a1a2a" stroke-width="1.6"/>
<text x="1390" y="1058" font-size="13" fill="#b02030" font-family="Liberation Sans" font-weight="normal" text-anchor="start" textLength="23.00" lengthAdjust="spacingAndGlyphs" >Pro</text>
<rect x="682.25" y="1070.5" width="7" height="3" fill="#909090" rx="1.5"/>
<rect x="847.25" y="1070.5" width="7" height="3" fill="#909090" rx="1.5"/>
<rect x="1122.25" y="1070.5" width="7" height="3" fill="#909090" rx="1.5"/>
<rect x="1232.25" y="1070.5" width="7" height="3" fill="#909090" rx="1.5"/>
<rect x="1397.25" y="1070.5" width="7" height="3" fill="#909090" rx="1.5"/>
<polyline points="1628.00,1054.00 1635.00,1047.00 1642.00,1054.00" fill="none" stroke="#f0f0f0" stroke-width="1.6" stroke-linejoin="round" />
<circle cx="1661" cy="1050" r="5" fill="#c8c8c8"/><circle cx="1666" cy="1048" r="4.5" fill="#c8c8c8"/>
<circle cx="1669" cy="1054" r="5" fill="#d02030"/>
<line x1="1667" y1="1052" x2="1671" y2="1056" stroke="#ffffff" stroke-width="1.4" />
<line x1="1671" y1="1052" x2="1667" y2="1056" stroke="#ffffff" stroke-width="1.4" />
<path d="M1690,1051.0 A11.0,11.0 0 0 1 1710,1051.0" fill="none" stroke="#f0f0f0" stroke-width="1.8"/>
<path d="M1693.5,1052.05 A7.15,7.15 0 0 1 1706.5,1052.05" fill="none" stroke="#f0f0f0" stroke-width="1.8"/>
<path d="M1697,1053.1 A3.3000000000000003,3.3000000000000003 0 0 1 1703,1053.1" fill="none" stroke="#f0f0f0" stroke-width="1.8"/>
<circle cx="1700" cy="1055" r="1.5" fill="#f0f0f0"/>
<path d="M1721,1046 H1725 L1730,1041 V1059 L1725,1054 H1721 Z" fill="none" stroke="#f0f0f0" stroke-width="1.6"/>
<path d="M1733,1046 Q1736,1050 1733,1054 M1736,1043 Q1741,1050 1736,1057" fill="none" stroke="#f0f0f0" stroke-width="1.5"/>
<rect x="1752" y="1044" width="16" height="12" fill="none" stroke="#f0f0f0" stroke-width="1.6"/>
<rect x="1768" y="1047" width="2" height="6" fill="#f0f0f0" />
<rect x="1753" y="1045" width="6" height="10" fill="#f0f0f0" />
<line x1="1751" y1="1041" x2="1751" y2="1046" stroke="#f0f0f0" stroke-width="1.5" />
<line x1="1754" y1="1041" x2="1754" y2="1046" stroke="#f0f0f0" stroke-width="1.5" />
<text x="1866.25" y="1044.5" font-size="14.5" fill="#ffffff" font-family="Liberation Sans" font-weight="normal" text-anchor="end" textLength="33.50" lengthAdjust="spacingAndGlyphs" >15:06</text>
<text x="1866.25" y="1064.5" font-size="14.5" fill="#ffffff" font-family="Liberation Sans" font-weight="normal" text-anchor="end" textLength="76.50" lengthAdjust="spacingAndGlyphs" >29/09/2022</text>
<circle cx="1886.25" cy="1050" r="10" fill="#48b8f0"/>
<text x="1882.5" y="1055" font-size="13" fill="#101010" font-family="Liberation Sans" font-weight="normal" text-anchor="start"  >1</text>
</svg>
</body></html>
